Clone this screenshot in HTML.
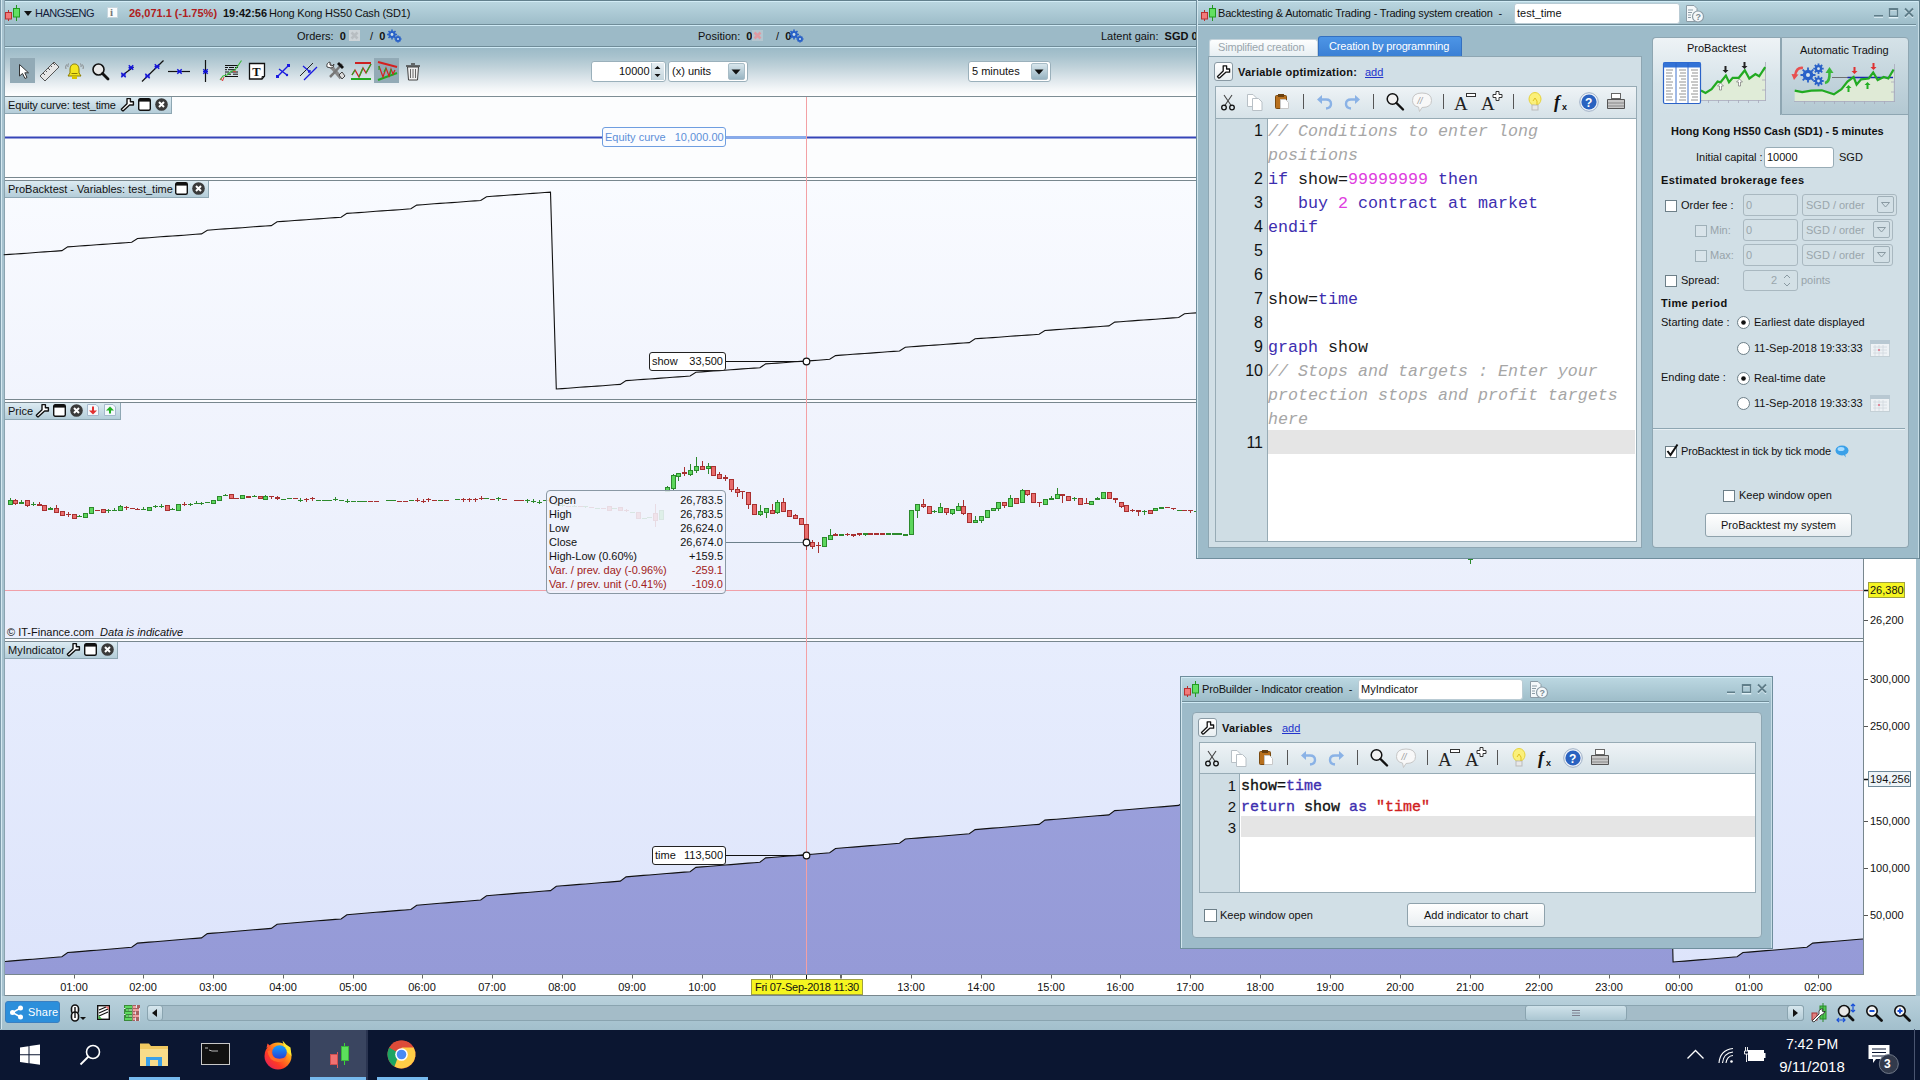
<!DOCTYPE html>
<html><head><meta charset="utf-8">
<style>
*{box-sizing:border-box}
html,body{margin:0;padding:0}
body{width:1920px;height:1080px;overflow:hidden;position:relative;background:#a3bfcc;font-family:"Liberation Sans",sans-serif;font-size:11px;color:#111}
.a{position:absolute}
.t{position:absolute;white-space:nowrap;line-height:1}
svg{position:absolute;overflow:visible}
</style></head><body>
<!-- top title bar -->
<div class="a" style="left:0;top:0;width:1920px;height:24px;background:linear-gradient(#bcd8e2,#9ebdc9)"></div>
<div class="a" style="left:0;top:0;width:1920px;height:1px;background:#62808d"></div>
<div class="a" style="left:0;top:1px;width:1920px;height:1px;background:#d2ecf6"></div>
<div class="a" style="left:0;top:24px;width:1920px;height:1px;background:#6f8c98"></div>
<div class="a" style="left:0;top:25px;width:1920px;height:1px;background:#cfeaf5"></div>
<svg style="left:4px;top:4px;z-index:2" width="17" height="18" viewBox="0 0 17 18"><line x1="4.5" y1="6" x2="4.5" y2="17" stroke="#b83030"/><rect x="1.5" y="8.5" width="6" height="6.5" fill="#f27a7a" stroke="#b83030"/><line x1="12.5" y1="1" x2="12.5" y2="17" stroke="#229922"/><rect x="9.5" y="4.5" width="6" height="8.5" fill="#62e062" stroke="#229922"/></svg>
<svg style="left:24px;top:11px" width="8" height="5"><path d="M0 0H8L4 5Z" fill="#111"/></svg>
<div class="t" style="left:35px;top:8px;font-size:11px;letter-spacing:-0.5px;color:#15203a">HANGSENG</div>
<div class="a" style="left:107px;top:7px;width:11px;height:11px;background:#fafcfd;border:1px solid #c6d6de"></div>
<div class="t" style="left:110px;top:7px;font-family:'Liberation Serif';font-weight:bold;font-size:11px;color:#777">i</div>
<div class="t" style="left:129px;top:8px;font-weight:bold;color:#b02020">26,071.1 (-1.75%)</div>
<div class="t" style="left:223px;top:8px;font-weight:bold;color:#111">19:42:56</div>
<div class="t" style="left:269px;top:8px;color:#111;letter-spacing:-0.2px">Hong Kong HS50 Cash (SD1)</div>

<!-- orders bar -->
<div class="a" style="left:0;top:26px;width:1920px;height:20px;background:#9cbac7"></div>
<div class="a" style="left:0;top:46px;width:1920px;height:1px;background:#6f8c98"></div>
<div class="a" style="left:0;top:47px;width:1920px;height:1px;background:#cfeaf5"></div>
<div class="t" style="left:297px;top:31px;color:#111">Orders:&nbsp; <b>0</b></div>
<div class="a" style="left:349px;top:30px;width:11px;height:11px;background:#cdd4d8"></div><svg style="left:349px;top:30px" width="11" height="11"><path d="M2.5 2.5L8.5 8.5M8.5 2.5L2.5 8.5" stroke="#b8bec2" stroke-width="2.6"/></svg>
<div class="t" style="left:370px;top:31px;color:#111">/&nbsp; <b>0</b></div>
<div class="t" style="left:698px;top:31px;color:#111">Position:&nbsp; <b>0</b></div>
<div class="a" style="left:752px;top:30px;width:11px;height:11px;background:#b4c6cf"></div><svg style="left:752px;top:30px" width="11" height="11"><path d="M2.5 2.5L8.5 8.5M8.5 2.5L2.5 8.5" stroke="#e09aa2" stroke-width="2.6"/></svg>
<div class="t" style="left:776px;top:31px;color:#111">/&nbsp; <b>0</b></div>
<div class="t" style="left:1101px;top:31px;color:#111">Latent gain:&nbsp; <b>SGD 0.</b></div>
<!-- toolbar -->
<div class="a" style="left:0;top:48px;width:1920px;height:48px;background:linear-gradient(#9cbac7 0%,#a9c3ce 18%,#c0d2da 40%,#dde6eb 65%,#f3f6f8 85%,#ffffff 100%)"></div>
<div class="a" style="left:0;top:96px;width:1920px;height:1px;background:#7d8d94"></div>
<!-- gears in orders bar -->
<svg style="left:386px;top:29px" width="16" height="14" viewBox="0 0 16 14"><g fill="#2a62c8"><circle cx="6" cy="5.5" r="3.6"/><circle cx="12" cy="10" r="2.6"/></g><g stroke="#2a62c8" stroke-width="1.6"><path d="M6 0.5V10.5M1 5.5H11M2.5 2L9.5 9M9.5 2L2.5 9"/><path d="M12 6.5V13.5M8.5 10H15.5M9.6 7.6L14.4 12.4M14.4 7.6L9.6 12.4"/></g><circle cx="6" cy="5.5" r="1.4" fill="#cfe0ea"/><circle cx="12" cy="10" r="1" fill="#cfe0ea"/></svg>
<svg style="left:788px;top:29px" width="16" height="14" viewBox="0 0 16 14"><g fill="#2a62c8"><circle cx="6" cy="5.5" r="3.6"/><circle cx="12" cy="10" r="2.6"/></g><g stroke="#2a62c8" stroke-width="1.6"><path d="M6 0.5V10.5M1 5.5H11M2.5 2L9.5 9M9.5 2L2.5 9"/><path d="M12 6.5V13.5M8.5 10H15.5M9.6 7.6L14.4 12.4M14.4 7.6L9.6 12.4"/></g><circle cx="6" cy="5.5" r="1.4" fill="#cfe0ea"/><circle cx="12" cy="10" r="1" fill="#cfe0ea"/></svg>
<!-- toolbar icons -->
<div class="a" style="left:10px;top:58px;width:25px;height:25px;background:#92aab6"></div>
<svg style="left:18px;top:63px" width="12" height="17" viewBox="0 0 12 17"><path d="M1.5 1.5V13L4.5 10.5L7 15.5L9 14.5L6.8 9.8H10.5Z" fill="#fff" stroke="#333" stroke-width="1"/></svg>
<svg style="left:39px;top:61px" width="21" height="21" viewBox="0 0 21 21"><path d="M1 15L15 1L20 6L6 20Z" fill="#e6e6e6" stroke="#555" stroke-width="1"/><path d="M4 12L6 14M6.5 9.5L8 11M9 7L11 9M11.5 4.5L13 6M14 2L16 4" stroke="#555" stroke-width="1"/></svg>
<svg style="left:64px;top:62px" width="21" height="18" viewBox="0 0 21 18"><path d="M10.5 2C7 2 6 5 6 8V11L4 14H17L15 11V8C15 5 14 2 10.5 2Z" fill="#f4e620" stroke="#8a7a00" stroke-width="1"/><rect x="8" y="14" width="5" height="3" fill="#d9c400"/><path d="M7.5 11.5H13.5" stroke="#8a7a00"/><path d="M2.5 2.5Q1 5 2 7M4.5 1.5Q3.5 3 4 5M18.5 2.5Q20 5 19 7M16.5 1.5Q17.5 3 17 5" stroke="#777" fill="none" stroke-width="0.8"/></svg>
<svg style="left:91px;top:62px" width="19" height="19" viewBox="0 0 19 19"><circle cx="7.5" cy="7.5" r="5.5" fill="#e8e8e8" stroke="#111" stroke-width="1.6"/><path d="M11.5 11.5L17 17" stroke="#111" stroke-width="2.8" stroke-linecap="round"/></svg>
<svg style="left:0;top:0" width="420" height="100" viewBox="0 0 420 100">
<defs><g id="mk"><path d="M-2.2 -2.2L2.2 2.2M2.2 -2.2L-2.2 2.2" stroke="#1414d8" stroke-width="1.5"/><path d="M-2.5 0H2.5" stroke="#1414d8" stroke-width="1"/></g></defs>
<path d="M122 75.5L133.5 67" stroke="#111" stroke-width="1.2"/><use href="#mk" x="123.5" y="75"/><use href="#mk" x="131" y="67.5"/>
<path d="M142 81.5L163.5 60.5" stroke="#111" stroke-width="1.2"/><use href="#mk" x="147.5" y="76"/><use href="#mk" x="157" y="66.5"/>
<path d="M168 71.5H190" stroke="#111" stroke-width="1.2"/><use href="#mk" x="179.5" y="71.5"/>
<path d="M205.5 60V82" stroke="#111" stroke-width="1.2"/><use href="#mk" x="205.5" y="71.5"/>
<path d="M225 65.5H238M225 76.5H238" stroke="#111" stroke-width="1.1"/><path d="M225 67.5H228M229 67.5H234M235 67.5H238M225 69.7H227M228 69.7H236M225 72H229M231 72H238M225 74.2H226M227 74.2H231M233 74.2H238" stroke="#111" stroke-width="1"/>
<path d="M220 80L223 76L227 75L231 71.5L235 70L241.5 60.5" stroke="#3ab83a" stroke-width="1.1" fill="none"/><path d="M221 78L222.5 81L224 77M233 71L236 72" stroke="#e04040" stroke-width="1" fill="none"/>
<path d="M249.5 63.5H264.5V76L262 79H249.5Z" fill="#fff" stroke="#111" stroke-width="1.3"/><path d="M262 79V76.5H264.5" fill="none" stroke="#111" stroke-width="0.9"/>
<text x="252.3" y="75.5" font-family="Liberation Serif" font-weight="bold" font-size="12.5" fill="#111">T</text>
</svg>
<svg style="left:275px;top:63px" width="16" height="16" viewBox="0 0 16 16"><path d="M2 14L14 2M4 6L12 12" stroke="#1a1ae0" stroke-width="1.4"/><rect x="12" y="1" width="3" height="3" fill="#1a1ae0"/><rect x="1" y="12" width="3" height="3" fill="#1a1ae0"/><circle cx="12" cy="12" r="1.2" fill="#1a1ae0"/></svg>
<svg style="left:299px;top:61px" width="20" height="20" viewBox="0 0 20 20"><path d="M1 15L14 2" stroke="#222" stroke-width="1"/><path d="M5 19L18 6" stroke="#1a1ae0" stroke-width="1.2"/><path d="M4 5L11 11M9 11H11V9" stroke="#1a1ae0" stroke-width="1.3" fill="none"/></svg>
<svg style="left:325px;top:61px" width="21" height="20" viewBox="0 0 21 20"><path d="M4 3L16 17" stroke="#888" stroke-width="3.5"/><path d="M2 6Q1 2 5 1L5 4L7 5L9 3Q9 7 6 7Z" fill="#fff" stroke="#444"/><path d="M14 14L17 11L20 15L17 18Z" fill="#ddd" stroke="#444"/><path d="M17 3L8 13L5 16" stroke="#777" stroke-width="2.5"/><path d="M14 1L19 6L17 8L12 3Z" fill="#111"/></svg>
<svg style="left:350px;top:61px" width="22" height="20" viewBox="0 0 22 20"><path d="M5 2H21" stroke="#cc2020" stroke-width="2"/><path d="M1 18H21" stroke="#22aa22" stroke-width="2"/><path d="M2 14L5 9L9 16L13 7L16 12L21 3" stroke="#cc2020" stroke-width="1.3" fill="none"/><path d="M2 14L5 9M9 16L13 7M16 12L21 3" stroke="#22aa22" stroke-width="1.2" fill="none"/></svg>
<div class="a" style="left:374px;top:58px;width:25px;height:25px;background:#92aab6"></div>
<svg style="left:376px;top:60px" width="22" height="21" viewBox="0 0 22 21"><path d="M2 2L21 7" stroke="#d42020" stroke-width="2"/><path d="M2 20L21 13" stroke="#22aa22" stroke-width="2"/><path d="M3 6L7 17L10 8L13 16L15 9L17 14L19 10" stroke="#d42020" stroke-width="1.2" fill="none"/><path d="M3 6L3 10M10 8L8 12M15 9L14 14" stroke="#22aa22" stroke-width="1.2"/></svg>
<svg style="left:405px;top:62px" width="16" height="19" viewBox="0 0 16 19"><path d="M1 4H15" stroke="#444" stroke-width="1.5"/><path d="M6 2H10" stroke="#444" stroke-width="1.5"/><path d="M2.5 5L3.5 18H12.5L13.5 5Z" fill="#f0f0f0" stroke="#444"/><path d="M5.5 7V16M8 7V16M10.5 7V16" stroke="#666"/></svg>
<!-- inputs -->
<div class="a" style="left:591px;top:61px;width:75px;height:21px;background:#fff;border:1px solid #9ab0bb;border-radius:3px"></div>
<div class="t" style="left:619px;top:66px;font-size:11px">10000</div>
<div class="a" style="left:651px;top:63px;width:13px;height:17px;background:linear-gradient(#e6eef2,#c4d5dd);border-left:1px solid #b4c6cf"></div>
<svg style="left:653px;top:64px" width="9" height="15"><path d="M1.5 5L4.5 2L7.5 5Z M1.5 10L4.5 13L7.5 10Z" fill="#111"/></svg>
<div class="a" style="left:668px;top:61px;width:80px;height:21px;background:#fff;border:1px solid #9ab0bb;border-radius:3px"></div>
<div class="t" style="left:672px;top:66px;font-size:11px">(x) units</div>
<div class="a" style="left:728px;top:63px;width:17px;height:17px;background:linear-gradient(#d8e6ec,#98b4c2);border:1px solid #a8bcc6;border-radius:2px"></div>
<svg style="left:731px;top:69px" width="10" height="6"><path d="M0.5 0.5H9.5L5 5.5Z" fill="#111"/></svg>
<div class="a" style="left:968px;top:61px;width:83px;height:21px;background:#fff;border:1px solid #9ab0bb;border-radius:3px"></div>
<div class="t" style="left:972px;top:66px;font-size:11px">5 minutes</div>
<div class="a" style="left:1031px;top:63px;width:17px;height:17px;background:linear-gradient(#d8e6ec,#98b4c2);border:1px solid #a8bcc6;border-radius:2px"></div>
<svg style="left:1034px;top:69px" width="10" height="6"><path d="M0.5 0.5H9.5L5 5.5Z" fill="#111"/></svg>
<div class="a" style="left:0;top:0;width:1px;height:1029px;background:#7d9bab"></div>
<div class="a" style="left:1px;top:0;width:1px;height:1029px;background:#d4e8f0"></div>
<div class="a" style="left:2px;top:0;width:2px;height:1029px;background:#a6c2cf"></div>
<div class="a" style="left:4px;top:0;width:1px;height:996px;background:#8aa3af"></div>
<div class="a" style="left:1915px;top:96px;width:1px;height:900px;background:#8aa3af"></div>
<div class="a" style="left:5px;top:97px;width:1910px;height:898px;background:#fcfdff"></div>
<div class="a" style="left:5px;top:97px;width:1858px;height:80px;background:#fcfdfe"></div>
<div class="a" style="left:5px;top:177px;width:1859px;height:1px;background:#78878e"></div>
<div class="a" style="left:1863px;top:96px;width:1px;height:82px;background:#78878e"></div>
<div class="a" style="left:5px;top:181px;width:1858px;height:218px;background:linear-gradient(#f9fbff,#f1f4fd)"></div>
<div class="a" style="left:5px;top:399px;width:1859px;height:1px;background:#78878e"></div>
<div class="a" style="left:5px;top:180px;width:1859px;height:1px;background:#78878e"></div>
<div class="a" style="left:1863px;top:180px;width:1px;height:220px;background:#78878e"></div>
<div class="a" style="left:5px;top:403px;width:1858px;height:235px;background:linear-gradient(#f1f4fd,#e9eefc)"></div>
<div class="a" style="left:5px;top:638px;width:1859px;height:1px;background:#78878e"></div>
<div class="a" style="left:5px;top:402px;width:1859px;height:1px;background:#78878e"></div>
<div class="a" style="left:1863px;top:402px;width:1px;height:237px;background:#78878e"></div>
<div class="a" style="left:5px;top:642px;width:1858px;height:332px;background:linear-gradient(#e7edfd,#dde4fb)"></div>
<div class="a" style="left:5px;top:974px;width:1859px;height:1px;background:#78878e"></div>
<div class="a" style="left:5px;top:641px;width:1859px;height:1px;background:#78878e"></div>
<div class="a" style="left:1863px;top:641px;width:1px;height:334px;background:#78878e"></div>
<div class="a" style="left:5px;top:995px;width:1910px;height:1px;background:#78878e"></div>
<svg style="left:0;top:0" width="1920" height="1080" viewBox="0 0 1920 1080">
<path d="M5 137.5H1863" stroke="#3646b8" stroke-width="2"/>
<path d="M3.7 254.8 L9.5 254.4 L15.3 254.0 L21.1 253.6 L27.0 253.2 L32.8 252.7 L38.6 252.3 L44.4 251.9 L50.2 251.5 L56.0 251.1 L61.9 250.6 L67.7 246.9 L73.5 246.5 L79.3 246.0 L85.1 245.6 L90.9 245.2 L96.8 244.8 L102.6 244.4 L108.4 244.0 L114.2 243.5 L120.0 243.1 L125.8 242.7 L131.7 242.3 L137.5 238.5 L143.3 238.1 L149.1 237.7 L154.9 237.3 L160.7 236.8 L166.6 236.4 L172.4 236.0 L178.2 235.6 L184.0 235.2 L189.8 234.8 L195.7 234.3 L201.5 233.9 L207.3 230.2 L213.1 229.7 L218.9 229.3 L224.7 228.9 L230.6 228.5 L236.4 228.1 L242.2 227.7 L248.0 227.2 L253.8 226.8 L259.6 226.4 L265.5 226.0 L271.3 225.6 L277.1 221.8 L282.9 221.4 L288.7 221.0 L294.5 220.5 L300.4 220.1 L306.2 219.7 L312.0 219.3 L317.8 218.9 L323.6 218.5 L329.4 218.0 L335.2 217.6 L341.1 217.2 L346.9 213.4 L352.7 213.0 L358.5 212.6 L364.3 212.2 L370.1 211.8 L376.0 211.3 L381.8 210.9 L387.6 210.5 L393.4 210.1 L399.2 209.7 L405.0 209.3 L410.9 208.8 L416.7 205.1 L422.5 204.7 L428.3 204.2 L434.1 203.8 L439.9 203.4 L445.8 203.0 L451.6 202.6 L457.4 202.2 L463.2 201.7 L469.0 201.3 L474.8 200.9 L480.7 200.5 L486.5 196.7 L492.3 196.3 L498.1 195.9 L503.9 195.5 L509.7 195.0 L515.6 194.6 L521.4 194.2 L527.2 193.8 L533.0 193.4 L538.8 193.0 L544.6 192.5 L550.5 192.1 L556.3 389.0 L562.1 388.6 L567.9 388.2 L573.7 387.7 L579.5 387.3 L585.4 386.9 L591.2 386.5 L597.0 386.1 L602.8 385.7 L608.6 385.2 L614.4 384.8 L620.3 384.4 L626.1 380.6 L631.9 380.2 L637.7 379.8 L643.5 379.4 L649.3 379.0 L655.2 378.6 L661.0 378.1 L666.8 377.7 L672.6 377.3 L678.4 376.9 L684.2 376.5 L690.1 376.0 L695.9 372.3 L701.7 371.9 L707.5 371.4 L713.3 371.0 L719.2 370.6 L725.0 370.2 L730.8 369.8 L736.6 369.4 L742.4 368.9 L748.2 368.5 L754.1 368.1 L759.9 367.7 L765.7 363.9 L771.5 363.5 L777.3 363.1 L783.1 362.7 L789.0 362.2 L794.8 361.8 L800.6 361.4 L806.4 361.0 L812.2 360.6 L818.0 360.2 L823.9 359.7 L829.7 359.3 L835.5 355.6 L841.3 355.1 L847.1 354.7 L852.9 354.3 L858.8 353.9 L864.6 353.5 L870.4 353.1 L876.2 352.6 L882.0 352.2 L887.8 351.8 L893.7 351.4 L899.5 351.0 L905.3 347.2 L911.1 346.8 L916.9 346.4 L922.7 345.9 L928.6 345.5 L934.4 345.1 L940.2 344.7 L946.0 344.3 L951.8 343.9 L957.6 343.4 L963.5 343.0 L969.3 342.6 L975.1 338.8 L980.9 338.4 L986.7 338.0 L992.5 337.6 L998.4 337.2 L1004.2 336.8 L1010.0 336.3 L1015.8 335.9 L1021.6 335.5 L1027.4 335.1 L1033.3 334.7 L1039.1 334.2 L1044.9 330.5 L1050.7 330.1 L1056.5 329.6 L1062.3 329.2 L1068.2 328.8 L1074.0 328.4 L1079.8 328.0 L1085.6 327.6 L1091.4 327.1 L1097.2 326.7 L1103.1 326.3 L1108.9 325.9 L1114.7 322.1 L1120.5 321.7 L1126.3 321.3 L1132.1 320.9 L1138.0 320.4 L1143.8 320.0 L1149.6 319.6 L1155.4 319.2 L1161.2 318.8 L1167.0 318.4 L1172.9 317.9 L1178.7 317.5 L1184.5 313.8 L1190.3 313.3 L1196.1 312.9" stroke="#111" stroke-width="1.1" fill="none"/>
<clipPath id="cp1"><rect x="5" y="642" width="1858" height="332"/></clipPath>
<path clip-path="url(#cp1)" d="M5 974 L5.0 961.5 L9.5 961.1 L15.3 960.6 L21.1 960.1 L27.0 959.6 L32.8 959.2 L38.6 958.7 L44.4 958.2 L50.2 957.7 L56.0 957.3 L61.9 956.8 L67.7 952.5 L73.5 952.1 L79.3 951.6 L85.1 951.1 L90.9 950.6 L96.8 950.2 L102.6 949.7 L108.4 949.2 L114.2 948.8 L120.0 948.3 L125.8 947.8 L131.7 947.3 L137.5 943.1 L143.3 942.6 L149.1 942.1 L154.9 941.7 L160.7 941.2 L166.6 940.7 L172.4 940.2 L178.2 939.8 L184.0 939.3 L189.8 938.8 L195.7 938.4 L201.5 937.9 L207.3 933.6 L213.1 933.1 L218.9 932.7 L224.7 932.2 L230.6 931.7 L236.4 931.3 L242.2 930.8 L248.0 930.3 L253.8 929.8 L259.6 929.4 L265.5 928.9 L271.3 928.4 L277.1 924.2 L282.9 923.7 L288.7 923.2 L294.5 922.7 L300.4 922.3 L306.2 921.8 L312.0 921.3 L317.8 920.8 L323.6 920.4 L329.4 919.9 L335.2 919.4 L341.1 919.0 L346.9 914.7 L352.7 914.2 L358.5 913.8 L364.3 913.3 L370.1 912.8 L376.0 912.3 L381.8 911.9 L387.6 911.4 L393.4 910.9 L399.2 910.4 L405.0 910.0 L410.9 909.5 L416.7 905.2 L422.5 904.8 L428.3 904.3 L434.1 903.8 L439.9 903.3 L445.8 902.9 L451.6 902.4 L457.4 901.9 L463.2 901.5 L469.0 901.0 L474.8 900.5 L480.7 900.0 L486.5 895.8 L492.3 895.3 L498.1 894.8 L503.9 894.4 L509.7 893.9 L515.6 893.4 L521.4 892.9 L527.2 892.5 L533.0 892.0 L538.8 891.5 L544.6 891.0 L550.5 890.6 L556.3 886.3 L562.1 885.8 L567.9 885.4 L573.7 884.9 L579.5 884.4 L585.4 884.0 L591.2 883.5 L597.0 883.0 L602.8 882.5 L608.6 882.1 L614.4 881.6 L620.3 881.1 L626.1 876.9 L631.9 876.4 L637.7 875.9 L643.5 875.4 L649.3 875.0 L655.2 874.5 L661.0 874.0 L666.8 873.5 L672.6 873.1 L678.4 872.6 L684.2 872.1 L690.1 871.7 L695.9 867.4 L701.7 866.9 L707.5 866.5 L713.3 866.0 L719.2 865.5 L725.0 865.0 L730.8 864.6 L736.6 864.1 L742.4 863.6 L748.2 863.1 L754.1 862.7 L759.9 862.2 L765.7 857.9 L771.5 857.5 L777.3 857.0 L783.1 856.5 L789.0 856.0 L794.8 855.6 L800.6 855.1 L806.4 854.6 L812.2 854.2 L818.0 853.7 L823.9 853.2 L829.7 852.7 L835.5 848.5 L841.3 848.0 L847.1 847.5 L852.9 847.1 L858.8 846.6 L864.6 846.1 L870.4 845.6 L876.2 845.2 L882.0 844.7 L887.8 844.2 L893.7 843.8 L899.5 843.3 L905.3 839.0 L911.1 838.5 L916.9 838.1 L922.7 837.6 L928.6 837.1 L934.4 836.7 L940.2 836.2 L946.0 835.7 L951.8 835.2 L957.6 834.8 L963.5 834.3 L969.3 833.8 L975.1 829.6 L980.9 829.1 L986.7 828.6 L992.5 828.1 L998.4 827.7 L1004.2 827.2 L1010.0 826.7 L1015.8 826.2 L1021.6 825.8 L1027.4 825.3 L1033.3 824.8 L1039.1 824.4 L1044.9 820.1 L1050.7 819.6 L1056.5 819.2 L1062.3 818.7 L1068.2 818.2 L1074.0 817.7 L1079.8 817.3 L1085.6 816.8 L1091.4 816.3 L1097.2 815.8 L1103.1 815.4 L1108.9 814.9 L1114.7 810.6 L1120.5 810.2 L1126.3 809.7 L1132.1 809.2 L1138.0 808.7 L1143.8 808.3 L1149.6 807.8 L1155.4 807.3 L1161.2 806.9 L1167.0 806.4 L1172.9 805.9 L1178.7 805.4 L1184.5 801.2 L1190.3 800.7 L1196.1 800.2 L1201.9 799.8 L1207.8 799.3 L1213.6 798.8 L1219.4 798.3 L1225.2 797.9 L1231.0 797.4 L1236.8 796.9 L1242.7 796.5 L1248.5 796.0 L1254.3 791.7 L1260.1 791.2 L1265.9 790.8 L1271.7 790.3 L1277.6 789.8 L1283.4 789.4 L1289.2 788.9 L1295.0 788.4 L1300.8 787.9 L1306.6 787.5 L1312.5 787.0 L1318.3 786.5 L1324.1 782.3 L1329.9 781.8 L1335.7 781.3 L1341.5 780.8 L1347.3 780.4 L1353.2 779.9 L1359.0 779.4 L1364.8 778.9 L1370.6 778.5 L1376.4 778.0 L1382.2 777.5 L1388.1 777.1 L1393.9 772.8 L1399.7 772.3 L1405.5 771.9 L1411.3 771.4 L1417.1 770.9 L1423.0 770.4 L1428.8 770.0 L1434.6 769.5 L1440.4 769.0 L1446.2 768.5 L1452.0 768.1 L1457.9 767.6 L1463.7 763.3 L1469.5 762.9 L1475.3 762.4 L1481.1 761.9 L1486.9 761.4 L1492.8 761.0 L1498.6 760.5 L1504.4 760.0 L1510.2 759.6 L1516.0 759.1 L1521.8 758.6 L1527.7 758.1 L1533.5 753.9 L1539.3 753.4 L1545.1 752.9 L1550.9 752.5 L1556.7 752.0 L1562.6 751.5 L1568.4 751.0 L1574.2 750.6 L1580.0 750.1 L1585.8 749.6 L1591.6 749.1 L1597.5 748.7 L1603.3 744.4 L1609.1 743.9 L1614.9 743.5 L1620.7 743.0 L1626.5 742.5 L1632.4 742.1 L1638.2 741.6 L1644.0 741.1 L1649.8 740.6 L1655.6 740.2 L1661.4 739.7 L1667.3 739.2 L1673.1 962.0 L1678.9 961.5 L1684.7 961.1 L1690.5 960.6 L1696.3 960.1 L1702.2 959.6 L1708.0 959.2 L1713.8 958.7 L1719.6 958.2 L1725.4 957.7 L1731.2 957.3 L1737.1 956.8 L1742.9 952.5 L1748.7 952.1 L1754.5 951.6 L1760.3 951.1 L1766.1 950.6 L1772.0 950.2 L1777.8 949.7 L1783.6 949.2 L1789.4 948.8 L1795.2 948.3 L1801.0 947.8 L1806.9 947.3 L1812.7 943.1 L1818.5 942.6 L1824.3 942.1 L1830.1 941.7 L1835.9 941.2 L1841.8 940.7 L1847.6 940.2 L1853.4 939.8 L1859.2 939.3 L1865.0 938.8 L1863 974Z" fill="url(#ga)"/>
<defs><linearGradient id="ga" x1="0" y1="0" x2="0" y2="1"><stop offset="0" stop-color="#9ba1dc"/><stop offset="1" stop-color="#959ad7"/></linearGradient></defs>
<path clip-path="url(#cp1)" d="M5.0 961.5 L9.5 961.1 L15.3 960.6 L21.1 960.1 L27.0 959.6 L32.8 959.2 L38.6 958.7 L44.4 958.2 L50.2 957.7 L56.0 957.3 L61.9 956.8 L67.7 952.5 L73.5 952.1 L79.3 951.6 L85.1 951.1 L90.9 950.6 L96.8 950.2 L102.6 949.7 L108.4 949.2 L114.2 948.8 L120.0 948.3 L125.8 947.8 L131.7 947.3 L137.5 943.1 L143.3 942.6 L149.1 942.1 L154.9 941.7 L160.7 941.2 L166.6 940.7 L172.4 940.2 L178.2 939.8 L184.0 939.3 L189.8 938.8 L195.7 938.4 L201.5 937.9 L207.3 933.6 L213.1 933.1 L218.9 932.7 L224.7 932.2 L230.6 931.7 L236.4 931.3 L242.2 930.8 L248.0 930.3 L253.8 929.8 L259.6 929.4 L265.5 928.9 L271.3 928.4 L277.1 924.2 L282.9 923.7 L288.7 923.2 L294.5 922.7 L300.4 922.3 L306.2 921.8 L312.0 921.3 L317.8 920.8 L323.6 920.4 L329.4 919.9 L335.2 919.4 L341.1 919.0 L346.9 914.7 L352.7 914.2 L358.5 913.8 L364.3 913.3 L370.1 912.8 L376.0 912.3 L381.8 911.9 L387.6 911.4 L393.4 910.9 L399.2 910.4 L405.0 910.0 L410.9 909.5 L416.7 905.2 L422.5 904.8 L428.3 904.3 L434.1 903.8 L439.9 903.3 L445.8 902.9 L451.6 902.4 L457.4 901.9 L463.2 901.5 L469.0 901.0 L474.8 900.5 L480.7 900.0 L486.5 895.8 L492.3 895.3 L498.1 894.8 L503.9 894.4 L509.7 893.9 L515.6 893.4 L521.4 892.9 L527.2 892.5 L533.0 892.0 L538.8 891.5 L544.6 891.0 L550.5 890.6 L556.3 886.3 L562.1 885.8 L567.9 885.4 L573.7 884.9 L579.5 884.4 L585.4 884.0 L591.2 883.5 L597.0 883.0 L602.8 882.5 L608.6 882.1 L614.4 881.6 L620.3 881.1 L626.1 876.9 L631.9 876.4 L637.7 875.9 L643.5 875.4 L649.3 875.0 L655.2 874.5 L661.0 874.0 L666.8 873.5 L672.6 873.1 L678.4 872.6 L684.2 872.1 L690.1 871.7 L695.9 867.4 L701.7 866.9 L707.5 866.5 L713.3 866.0 L719.2 865.5 L725.0 865.0 L730.8 864.6 L736.6 864.1 L742.4 863.6 L748.2 863.1 L754.1 862.7 L759.9 862.2 L765.7 857.9 L771.5 857.5 L777.3 857.0 L783.1 856.5 L789.0 856.0 L794.8 855.6 L800.6 855.1 L806.4 854.6 L812.2 854.2 L818.0 853.7 L823.9 853.2 L829.7 852.7 L835.5 848.5 L841.3 848.0 L847.1 847.5 L852.9 847.1 L858.8 846.6 L864.6 846.1 L870.4 845.6 L876.2 845.2 L882.0 844.7 L887.8 844.2 L893.7 843.8 L899.5 843.3 L905.3 839.0 L911.1 838.5 L916.9 838.1 L922.7 837.6 L928.6 837.1 L934.4 836.7 L940.2 836.2 L946.0 835.7 L951.8 835.2 L957.6 834.8 L963.5 834.3 L969.3 833.8 L975.1 829.6 L980.9 829.1 L986.7 828.6 L992.5 828.1 L998.4 827.7 L1004.2 827.2 L1010.0 826.7 L1015.8 826.2 L1021.6 825.8 L1027.4 825.3 L1033.3 824.8 L1039.1 824.4 L1044.9 820.1 L1050.7 819.6 L1056.5 819.2 L1062.3 818.7 L1068.2 818.2 L1074.0 817.7 L1079.8 817.3 L1085.6 816.8 L1091.4 816.3 L1097.2 815.8 L1103.1 815.4 L1108.9 814.9 L1114.7 810.6 L1120.5 810.2 L1126.3 809.7 L1132.1 809.2 L1138.0 808.7 L1143.8 808.3 L1149.6 807.8 L1155.4 807.3 L1161.2 806.9 L1167.0 806.4 L1172.9 805.9 L1178.7 805.4 L1184.5 801.2 L1190.3 800.7 L1196.1 800.2 L1201.9 799.8 L1207.8 799.3 L1213.6 798.8 L1219.4 798.3 L1225.2 797.9 L1231.0 797.4 L1236.8 796.9 L1242.7 796.5 L1248.5 796.0 L1254.3 791.7 L1260.1 791.2 L1265.9 790.8 L1271.7 790.3 L1277.6 789.8 L1283.4 789.4 L1289.2 788.9 L1295.0 788.4 L1300.8 787.9 L1306.6 787.5 L1312.5 787.0 L1318.3 786.5 L1324.1 782.3 L1329.9 781.8 L1335.7 781.3 L1341.5 780.8 L1347.3 780.4 L1353.2 779.9 L1359.0 779.4 L1364.8 778.9 L1370.6 778.5 L1376.4 778.0 L1382.2 777.5 L1388.1 777.1 L1393.9 772.8 L1399.7 772.3 L1405.5 771.9 L1411.3 771.4 L1417.1 770.9 L1423.0 770.4 L1428.8 770.0 L1434.6 769.5 L1440.4 769.0 L1446.2 768.5 L1452.0 768.1 L1457.9 767.6 L1463.7 763.3 L1469.5 762.9 L1475.3 762.4 L1481.1 761.9 L1486.9 761.4 L1492.8 761.0 L1498.6 760.5 L1504.4 760.0 L1510.2 759.6 L1516.0 759.1 L1521.8 758.6 L1527.7 758.1 L1533.5 753.9 L1539.3 753.4 L1545.1 752.9 L1550.9 752.5 L1556.7 752.0 L1562.6 751.5 L1568.4 751.0 L1574.2 750.6 L1580.0 750.1 L1585.8 749.6 L1591.6 749.1 L1597.5 748.7 L1603.3 744.4 L1609.1 743.9 L1614.9 743.5 L1620.7 743.0 L1626.5 742.5 L1632.4 742.1 L1638.2 741.6 L1644.0 741.1 L1649.8 740.6 L1655.6 740.2 L1661.4 739.7 L1667.3 739.2 L1673.1 962.0 L1678.9 961.5 L1684.7 961.1 L1690.5 960.6 L1696.3 960.1 L1702.2 959.6 L1708.0 959.2 L1713.8 958.7 L1719.6 958.2 L1725.4 957.7 L1731.2 957.3 L1737.1 956.8 L1742.9 952.5 L1748.7 952.1 L1754.5 951.6 L1760.3 951.1 L1766.1 950.6 L1772.0 950.2 L1777.8 949.7 L1783.6 949.2 L1789.4 948.8 L1795.2 948.3 L1801.0 947.8 L1806.9 947.3 L1812.7 943.1 L1818.5 942.6 L1824.3 942.1 L1830.1 941.7 L1835.9 941.2 L1841.8 940.7 L1847.6 940.2 L1853.4 939.8 L1859.2 939.3 L1865.0 938.8" stroke="#111" stroke-width="1.1" fill="none"/>
<path d="M806.5 97V978" stroke="#f3a0a4" stroke-width="1"/>
<path d="M5 590.5H1864" stroke="#f0a0a8" stroke-width="1"/>
</svg><svg style="left:0;top:0" width="1920" height="1080" viewBox="0 0 1920 1080"><clipPath id="cp2"><rect x="5" y="403" width="1858" height="235"/></clipPath><g clip-path="url(#cp2)" shape-rendering="crispEdges"><path d="M10.5 498.0V504.5" stroke="#2c8a2c"/><rect x="8.5" y="500.5" width="4" height="4" fill="#5cd65c" stroke="#2c8a2c"/><path d="M15.5 499.0V505.0" stroke="#a83030"/><rect x="13.5" y="500.5" width="4" height="3" fill="#e86c6c" stroke="#a83030"/><path d="M21.5 500.0V504.0" stroke="#2c8a2c"/><rect x="19" y="502" width="5" height="2" fill="#2c8a2c"/><path d="M27.5 500.5V507.0" stroke="#a83030"/><rect x="25.5" y="500.5" width="4" height="5" fill="#e86c6c" stroke="#a83030"/><path d="M33.5 502.0V506.0" stroke="#2c8a2c"/><rect x="31" y="504" width="5" height="1" fill="#2c8a2c"/><path d="M39.5 502.0V505.5" stroke="#a83030"/><rect x="37" y="504" width="5" height="2" fill="#a83030"/><path d="M44.5 505.0V510.0" stroke="#a83030"/><rect x="42.5" y="505.5" width="4" height="5" fill="#e86c6c" stroke="#a83030"/><path d="M50.5 507.0V509.5" stroke="#2c8a2c"/><rect x="48" y="508" width="5" height="2" fill="#2c8a2c"/><path d="M56.5 505.0V513.0" stroke="#a83030"/><rect x="54.5" y="508.5" width="4" height="4" fill="#e86c6c" stroke="#a83030"/><rect x="60.5" y="511.5" width="4" height="4" fill="#e86c6c" stroke="#a83030"/><path d="M68.5 512.0V517.0" stroke="#a83030"/><rect x="66" y="514" width="5" height="1" fill="#a83030"/><rect x="72.5" y="514.5" width="4" height="4" fill="#e86c6c" stroke="#a83030"/><path d="M79.5 515.0V517.0" stroke="#2c8a2c"/><rect x="77" y="516" width="5" height="1" fill="#2c8a2c"/><rect x="83.5" y="513.5" width="4" height="4" fill="#5cd65c" stroke="#2c8a2c"/><rect x="89.5" y="507.5" width="4" height="6" fill="#5cd65c" stroke="#2c8a2c"/><rect x="95" y="510" width="5" height="1" fill="#a83030"/><path d="M103.5 509.0V513.0" stroke="#a83030"/><rect x="101.5" y="509.5" width="4" height="3" fill="#e86c6c" stroke="#a83030"/><path d="M108.5 509.0V513.0" stroke="#2c8a2c"/><rect x="106" y="510" width="5" height="1" fill="#2c8a2c"/><path d="M114.5 508.0V510.5" stroke="#2c8a2c"/><rect x="112" y="510" width="5" height="1" fill="#2c8a2c"/><path d="M120.5 505.0V509.5" stroke="#2c8a2c"/><rect x="118.5" y="506.5" width="4" height="4" fill="#5cd65c" stroke="#2c8a2c"/><path d="M126.5 506.0V510.0" stroke="#a83030"/><rect x="124" y="507" width="5" height="1" fill="#a83030"/><rect x="130" y="508" width="5" height="1" fill="#a83030"/><path d="M137.5 508.0V510.0" stroke="#a83030"/><rect x="135" y="509" width="5" height="1" fill="#a83030"/><path d="M143.5 507.0V510.0" stroke="#2c8a2c"/><rect x="141" y="509" width="5" height="1" fill="#2c8a2c"/><path d="M149.5 507.0V511.0" stroke="#2c8a2c"/><rect x="147.5" y="507.5" width="4" height="3" fill="#5cd65c" stroke="#2c8a2c"/><path d="M155.5 505.0V508.0" stroke="#2c8a2c"/><rect x="153" y="506" width="5" height="1" fill="#2c8a2c"/><path d="M161.5 504.0V508.0" stroke="#2c8a2c"/><rect x="159" y="506" width="5" height="1" fill="#2c8a2c"/><rect x="165.5" y="505.5" width="4" height="5" fill="#e86c6c" stroke="#a83030"/><path d="M172.5 508.0V509.8" stroke="#2c8a2c"/><rect x="170" y="509" width="5" height="1" fill="#2c8a2c"/><rect x="176.5" y="504.5" width="4" height="6" fill="#5cd65c" stroke="#2c8a2c"/><path d="M184.5 502.0V506.0" stroke="#a83030"/><rect x="182" y="504" width="5" height="1" fill="#a83030"/><path d="M190.5 503.0V506.0" stroke="#2c8a2c"/><rect x="188" y="504" width="5" height="1" fill="#2c8a2c"/><path d="M196.5 501.0V504.0" stroke="#2c8a2c"/><rect x="194" y="503" width="5" height="1" fill="#2c8a2c"/><path d="M201.5 502.0V505.0" stroke="#2c8a2c"/><rect x="199" y="503" width="5" height="1" fill="#2c8a2c"/><rect x="205" y="502" width="5" height="1" fill="#2c8a2c"/><rect x="211.5" y="500.5" width="4" height="3" fill="#5cd65c" stroke="#2c8a2c"/><rect x="217.5" y="496.5" width="4" height="4" fill="#5cd65c" stroke="#2c8a2c"/><path d="M225.5 494.0V496.0" stroke="#2c8a2c"/><rect x="223" y="495" width="5" height="1" fill="#2c8a2c"/><path d="M231.5 493.5V498.5" stroke="#a83030"/><rect x="229.5" y="494.5" width="4" height="4" fill="#e86c6c" stroke="#a83030"/><rect x="234" y="498" width="5" height="1" fill="#a83030"/><rect x="240.5" y="495.5" width="4" height="3" fill="#5cd65c" stroke="#2c8a2c"/><rect x="246" y="496" width="5" height="2" fill="#a83030"/><path d="M254.5 495.0V497.0" stroke="#2c8a2c"/><rect x="252" y="496" width="5" height="1" fill="#2c8a2c"/><rect x="258.5" y="496.5" width="4" height="2" fill="#e86c6c" stroke="#a83030"/><path d="M265.5 495.0V500.0" stroke="#2c8a2c"/><rect x="263.5" y="496.5" width="4" height="3" fill="#5cd65c" stroke="#2c8a2c"/><path d="M271.5 496.5V498.5" stroke="#a83030"/><rect x="269" y="496" width="5" height="1" fill="#a83030"/><path d="M277.5 496.0V500.0" stroke="#a83030"/><rect x="275" y="497" width="5" height="2" fill="#a83030"/><rect x="281" y="499" width="5" height="1" fill="#2c8a2c"/><rect x="287" y="498" width="5" height="1" fill="#2c8a2c"/><rect x="293" y="498" width="5" height="1" fill="#a83030"/><path d="M300.5 498.0V502.0" stroke="#2c8a2c"/><rect x="298" y="500" width="5" height="1" fill="#2c8a2c"/><path d="M306.5 497.8V501.8" stroke="#a83030"/><rect x="304" y="499" width="5" height="1" fill="#a83030"/><path d="M312.5 496.8V500.8" stroke="#a83030"/><rect x="310" y="498" width="5" height="1" fill="#a83030"/><rect x="316" y="500" width="5" height="1" fill="#2c8a2c"/><rect x="322" y="500" width="5" height="1" fill="#2c8a2c"/><rect x="327" y="500" width="5" height="1" fill="#2c8a2c"/><path d="M335.5 497.4V501.4" stroke="#2c8a2c"/><rect x="333" y="499" width="5" height="1" fill="#2c8a2c"/><rect x="339" y="500" width="5" height="1" fill="#2c8a2c"/><path d="M347.5 499.3V503.3" stroke="#2c8a2c"/><rect x="345" y="501" width="5" height="1" fill="#2c8a2c"/><rect x="351" y="501" width="5" height="1" fill="#2c8a2c"/><rect x="357" y="501" width="5" height="1" fill="#2c8a2c"/><rect x="362" y="501" width="5" height="1" fill="#2c8a2c"/><rect x="368" y="501" width="5" height="1" fill="#a83030"/><rect x="374" y="501" width="5" height="1" fill="#a83030"/><rect x="386" y="500" width="5" height="1" fill="#2c8a2c"/><rect x="391" y="500" width="5" height="1" fill="#2c8a2c"/><rect x="397" y="501" width="5" height="1" fill="#a83030"/><rect x="403" y="501" width="5" height="1" fill="#a83030"/><rect x="409" y="500" width="5" height="1" fill="#2c8a2c"/><path d="M417.5 498.4V502.4" stroke="#a83030"/><rect x="415" y="500" width="5" height="1" fill="#a83030"/><path d="M423.5 499.0V503.0" stroke="#a83030"/><rect x="421" y="501" width="5" height="1" fill="#a83030"/><path d="M428.5 497.8V501.8" stroke="#a83030"/><rect x="426" y="499" width="5" height="1" fill="#a83030"/><rect x="432" y="500" width="5" height="1" fill="#a83030"/><rect x="438" y="500" width="5" height="1" fill="#2c8a2c"/><rect x="444" y="500" width="5" height="1" fill="#a83030"/><rect x="455" y="499" width="5" height="1" fill="#2c8a2c"/><path d="M463.5 497.7V501.7" stroke="#a83030"/><rect x="461" y="499" width="5" height="1" fill="#a83030"/><path d="M469.5 497.8V501.8" stroke="#a83030"/><rect x="467" y="499" width="5" height="1" fill="#a83030"/><path d="M475.5 497.6V501.6" stroke="#a83030"/><rect x="473" y="499" width="5" height="1" fill="#a83030"/><path d="M481.5 496.3V500.3" stroke="#a83030"/><rect x="479" y="498" width="5" height="1" fill="#a83030"/><rect x="484" y="498" width="5" height="1" fill="#2c8a2c"/><rect x="490" y="499" width="5" height="1" fill="#a83030"/><path d="M498.5 496.9V500.9" stroke="#2c8a2c"/><rect x="496" y="498" width="5" height="1" fill="#2c8a2c"/><rect x="502" y="499" width="5" height="1" fill="#a83030"/><rect x="514" y="500" width="5" height="1" fill="#a83030"/><rect x="519" y="500" width="5" height="1" fill="#a83030"/><path d="M527.5 498.7V502.7" stroke="#2c8a2c"/><rect x="525" y="500" width="5" height="1" fill="#2c8a2c"/><path d="M533.5 499.2V503.2" stroke="#2c8a2c"/><rect x="531" y="501" width="5" height="1" fill="#2c8a2c"/><path d="M539.5 500.2V504.2" stroke="#2c8a2c"/><rect x="537" y="502" width="5" height="1" fill="#2c8a2c"/><rect x="543" y="500" width="5" height="1" fill="#2c8a2c"/><rect x="548" y="500" width="5" height="1" fill="#a83030"/><rect x="554" y="504" width="5" height="1" fill="#2c8a2c"/><path d="M562.5 504.0V507.0" stroke="#2c8a2c"/><rect x="560" y="505" width="5" height="1" fill="#2c8a2c"/><rect x="566" y="506" width="5" height="1" fill="#a83030"/><path d="M574.5 505.0V507.0" stroke="#2c8a2c"/><rect x="572" y="506" width="5" height="1" fill="#2c8a2c"/><rect x="578" y="506" width="5" height="1" fill="#a83030"/><path d="M585.5 506.0V508.0" stroke="#2c8a2c"/><rect x="583" y="506" width="5" height="1" fill="#2c8a2c"/><rect x="589" y="507" width="5" height="1" fill="#a83030"/><rect x="595" y="508" width="5" height="1" fill="#2c8a2c"/><rect x="601" y="508" width="5" height="1" fill="#a83030"/><rect x="607.5" y="506.5" width="4" height="4" fill="#e86c6c" stroke="#a83030"/><rect x="612" y="508" width="5" height="1" fill="#2c8a2c"/><rect x="618.5" y="507.5" width="4" height="3" fill="#e86c6c" stroke="#a83030"/><path d="M626.5 509.0V512.0" stroke="#a83030"/><rect x="624" y="510" width="5" height="1" fill="#a83030"/><rect x="630" y="512" width="5" height="1" fill="#2c8a2c"/><rect x="636.5" y="512.5" width="4" height="6" fill="#e86c6c" stroke="#a83030"/><path d="M644.5 517.5V519.0" stroke="#2c8a2c"/><rect x="642" y="518" width="5" height="1" fill="#2c8a2c"/><rect x="647" y="517" width="5" height="1" fill="#2c8a2c"/><path d="M655.5 504.0V527.0" stroke="#a83030"/><rect x="653.5" y="513.5" width="4" height="7" fill="#e86c6c" stroke="#a83030"/><rect x="659.5" y="510.5" width="4" height="9" fill="#5cd65c" stroke="#2c8a2c"/><path d="M667.5 486.0V491.0" stroke="#2c8a2c"/><rect x="665.5" y="487.5" width="4" height="4" fill="#5cd65c" stroke="#2c8a2c"/><path d="M673.5 474.0V490.0" stroke="#2c8a2c"/><rect x="671.5" y="475.5" width="4" height="13" fill="#5cd65c" stroke="#2c8a2c"/><path d="M678.5 473.0V481.0" stroke="#2c8a2c"/><rect x="676.5" y="473.5" width="4" height="3" fill="#5cd65c" stroke="#2c8a2c"/><path d="M684.5 467.0V476.0" stroke="#a83030"/><rect x="682" y="472" width="5" height="2" fill="#a83030"/><path d="M690.5 464.0V476.0" stroke="#2c8a2c"/><rect x="688.5" y="470.5" width="4" height="4" fill="#5cd65c" stroke="#2c8a2c"/><path d="M696.5 457.0V472.5" stroke="#2c8a2c"/><rect x="694.5" y="466.5" width="4" height="4" fill="#5cd65c" stroke="#2c8a2c"/><path d="M702.5 461.0V470.0" stroke="#a83030"/><rect x="700.5" y="466.5" width="4" height="3" fill="#e86c6c" stroke="#a83030"/><path d="M708.5 463.0V473.5" stroke="#2c8a2c"/><rect x="706.5" y="466.5" width="4" height="2" fill="#5cd65c" stroke="#2c8a2c"/><rect x="711.5" y="466.5" width="4" height="9" fill="#e86c6c" stroke="#a83030"/><path d="M719.5 472.0V478.5" stroke="#a83030"/><rect x="717.5" y="474.5" width="4" height="4" fill="#e86c6c" stroke="#a83030"/><path d="M725.5 475.0V481.0" stroke="#a83030"/><rect x="723" y="477" width="5" height="2" fill="#a83030"/><path d="M731.5 479.0V491.6" stroke="#a83030"/><rect x="729.5" y="479.5" width="4" height="10" fill="#e86c6c" stroke="#a83030"/><path d="M737.5 487.0V496.6" stroke="#a83030"/><rect x="735.5" y="489.5" width="4" height="3" fill="#e86c6c" stroke="#a83030"/><path d="M742.5 491.0V499.0" stroke="#a83030"/><rect x="740" y="491" width="5" height="1" fill="#a83030"/><path d="M748.5 492.0V508.7" stroke="#a83030"/><rect x="746.5" y="492.5" width="4" height="12" fill="#e86c6c" stroke="#a83030"/><rect x="752.5" y="504.5" width="4" height="10" fill="#e86c6c" stroke="#a83030"/><path d="M760.5 505.0V515.5" stroke="#2c8a2c"/><rect x="758.5" y="511.5" width="4" height="3" fill="#5cd65c" stroke="#2c8a2c"/><path d="M766.5 508.0V517.5" stroke="#2c8a2c"/><rect x="764.5" y="508.5" width="4" height="4" fill="#5cd65c" stroke="#2c8a2c"/><path d="M772.5 504.0V513.0" stroke="#a83030"/><rect x="770.5" y="510.5" width="4" height="3" fill="#e86c6c" stroke="#a83030"/><path d="M777.5 500.0V513.7" stroke="#2c8a2c"/><rect x="775.5" y="502.5" width="4" height="10" fill="#5cd65c" stroke="#2c8a2c"/><path d="M783.5 498.0V511.0" stroke="#a83030"/><rect x="781.5" y="502.5" width="4" height="9" fill="#e86c6c" stroke="#a83030"/><rect x="787.5" y="510.5" width="4" height="6" fill="#e86c6c" stroke="#a83030"/><path d="M795.5 514.0V519.0" stroke="#a83030"/><rect x="793.5" y="515.5" width="4" height="3" fill="#e86c6c" stroke="#a83030"/><rect x="799.5" y="518.5" width="4" height="6" fill="#e86c6c" stroke="#a83030"/><path d="M806.5 524.0V550.0" stroke="#a83030"/><rect x="804.5" y="524.5" width="4" height="18" fill="#e86c6c" stroke="#a83030"/><path d="M812.5 540.0V549.0" stroke="#a83030"/><rect x="810.5" y="542.5" width="4" height="4" fill="#e86c6c" stroke="#a83030"/><path d="M818.5 542.0V552.8" stroke="#a83030"/><rect x="816" y="545" width="5" height="1" fill="#a83030"/><rect x="822.5" y="537.5" width="4" height="9" fill="#5cd65c" stroke="#2c8a2c"/><path d="M830.5 529.0V540.0" stroke="#2c8a2c"/><rect x="828.5" y="535.5" width="4" height="4" fill="#5cd65c" stroke="#2c8a2c"/><path d="M835.5 533.0V536.0" stroke="#a83030"/><rect x="833" y="534" width="5" height="2" fill="#a83030"/><rect x="839" y="534" width="5" height="2" fill="#2c8a2c"/><path d="M847.5 533.0V535.5" stroke="#a83030"/><rect x="845" y="534" width="5" height="1" fill="#a83030"/><path d="M853.5 533.8V536.5" stroke="#a83030"/><rect x="851" y="534" width="5" height="2" fill="#a83030"/><path d="M859.5 533.1V535.8" stroke="#a83030"/><rect x="857" y="533" width="5" height="2" fill="#a83030"/><path d="M865.5 533.4V536.1" stroke="#2c8a2c"/><rect x="863" y="533" width="5" height="2" fill="#2c8a2c"/><rect x="868" y="533" width="5" height="2" fill="#a83030"/><rect x="874" y="533" width="5" height="2" fill="#a83030"/><rect x="880" y="533" width="5" height="2" fill="#a83030"/><rect x="886" y="533" width="5" height="2" fill="#2c8a2c"/><rect x="892" y="533" width="5" height="2" fill="#2c8a2c"/><rect x="897" y="533" width="5" height="2" fill="#2c8a2c"/><rect x="903" y="534" width="5" height="2" fill="#2c8a2c"/><rect x="909.5" y="510.5" width="4" height="24" fill="#5cd65c" stroke="#2c8a2c"/><path d="M917.5 504.0V518.0" stroke="#2c8a2c"/><rect x="915.5" y="504.5" width="4" height="6" fill="#5cd65c" stroke="#2c8a2c"/><path d="M923.5 499.0V508.0" stroke="#a83030"/><rect x="921.5" y="504.5" width="4" height="2" fill="#e86c6c" stroke="#a83030"/><rect x="927.5" y="506.5" width="4" height="7" fill="#e86c6c" stroke="#a83030"/><path d="M934.5 510.0V513.0" stroke="#2c8a2c"/><rect x="932" y="511" width="5" height="1" fill="#2c8a2c"/><path d="M940.5 503.0V512.0" stroke="#2c8a2c"/><rect x="938.5" y="507.5" width="4" height="5" fill="#5cd65c" stroke="#2c8a2c"/><path d="M946.5 508.0V515.0" stroke="#a83030"/><rect x="944.5" y="508.5" width="4" height="4" fill="#e86c6c" stroke="#a83030"/><path d="M952.5 509.0V515.0" stroke="#2c8a2c"/><rect x="950.5" y="509.5" width="4" height="4" fill="#5cd65c" stroke="#2c8a2c"/><path d="M958.5 503.0V511.0" stroke="#2c8a2c"/><rect x="956.5" y="506.5" width="4" height="4" fill="#5cd65c" stroke="#2c8a2c"/><path d="M963.5 500.0V515.0" stroke="#a83030"/><rect x="961.5" y="506.5" width="4" height="7" fill="#e86c6c" stroke="#a83030"/><rect x="967.5" y="513.5" width="4" height="9" fill="#e86c6c" stroke="#a83030"/><path d="M975.5 516.0V522.5" stroke="#2c8a2c"/><rect x="973.5" y="520.5" width="4" height="2" fill="#5cd65c" stroke="#2c8a2c"/><path d="M981.5 516.0V523.0" stroke="#2c8a2c"/><rect x="979.5" y="516.5" width="4" height="4" fill="#5cd65c" stroke="#2c8a2c"/><rect x="985.5" y="510.5" width="4" height="7" fill="#5cd65c" stroke="#2c8a2c"/><rect x="991.5" y="508.5" width="4" height="2" fill="#5cd65c" stroke="#2c8a2c"/><path d="M998.5 502.0V511.0" stroke="#2c8a2c"/><rect x="996.5" y="502.5" width="4" height="6" fill="#5cd65c" stroke="#2c8a2c"/><path d="M1004.5 502.0V508.0" stroke="#a83030"/><rect x="1002.5" y="502.5" width="4" height="3" fill="#e86c6c" stroke="#a83030"/><path d="M1010.5 495.0V505.6" stroke="#2c8a2c"/><rect x="1008.5" y="498.5" width="4" height="8" fill="#5cd65c" stroke="#2c8a2c"/><rect x="1014.5" y="498.5" width="4" height="5" fill="#e86c6c" stroke="#a83030"/><path d="M1022.5 489.0V502.0" stroke="#2c8a2c"/><rect x="1020.5" y="490.5" width="4" height="12" fill="#5cd65c" stroke="#2c8a2c"/><path d="M1027.5 490.0V496.0" stroke="#a83030"/><rect x="1025.5" y="490.5" width="4" height="4" fill="#e86c6c" stroke="#a83030"/><rect x="1031.5" y="493.5" width="4" height="9" fill="#e86c6c" stroke="#a83030"/><path d="M1039.5 502.0V507.0" stroke="#a83030"/><rect x="1037" y="502" width="5" height="1" fill="#a83030"/><rect x="1043.5" y="499.5" width="4" height="5" fill="#5cd65c" stroke="#2c8a2c"/><path d="M1051.5 496.0V500.0" stroke="#2c8a2c"/><rect x="1049" y="498" width="5" height="2" fill="#2c8a2c"/><path d="M1057.5 488.0V497.5" stroke="#2c8a2c"/><rect x="1055.5" y="494.5" width="4" height="4" fill="#5cd65c" stroke="#2c8a2c"/><path d="M1062.5 494.0V503.0" stroke="#a83030"/><rect x="1060" y="494" width="5" height="2" fill="#a83030"/><path d="M1068.5 496.0V501.0" stroke="#a83030"/><rect x="1066.5" y="496.5" width="4" height="4" fill="#e86c6c" stroke="#a83030"/><path d="M1074.5 497.0V500.5" stroke="#2c8a2c"/><rect x="1072" y="498" width="5" height="1" fill="#2c8a2c"/><path d="M1080.5 498.5V504.0" stroke="#a83030"/><rect x="1078.5" y="498.5" width="4" height="6" fill="#e86c6c" stroke="#a83030"/><path d="M1086.5 498.0V503.8" stroke="#a83030"/><rect x="1084" y="503" width="5" height="1" fill="#a83030"/><path d="M1091.5 501.0V505.0" stroke="#2c8a2c"/><rect x="1089.5" y="501.5" width="4" height="3" fill="#5cd65c" stroke="#2c8a2c"/><path d="M1097.5 497.0V500.0" stroke="#2c8a2c"/><rect x="1095" y="498" width="5" height="2" fill="#2c8a2c"/><rect x="1101.5" y="492.5" width="4" height="6" fill="#5cd65c" stroke="#2c8a2c"/><rect x="1107.5" y="492.5" width="4" height="6" fill="#e86c6c" stroke="#a83030"/><path d="M1115.5 498.0V503.0" stroke="#a83030"/><rect x="1113" y="498" width="5" height="2" fill="#a83030"/><path d="M1121.5 502.0V508.0" stroke="#a83030"/><rect x="1119.5" y="502.5" width="4" height="4" fill="#e86c6c" stroke="#a83030"/><rect x="1124.5" y="505.5" width="4" height="6" fill="#e86c6c" stroke="#a83030"/><path d="M1132.5 508.5V512.0" stroke="#a83030"/><rect x="1130" y="510" width="5" height="1" fill="#a83030"/><path d="M1138.5 510.0V516.0" stroke="#a83030"/><rect x="1136" y="510" width="5" height="2" fill="#a83030"/><path d="M1144.5 510.0V515.0" stroke="#2c8a2c"/><rect x="1142" y="511" width="5" height="1" fill="#2c8a2c"/><rect x="1148.5" y="510.5" width="4" height="3" fill="#e86c6c" stroke="#a83030"/><rect x="1153.5" y="508.5" width="4" height="2" fill="#5cd65c" stroke="#2c8a2c"/><rect x="1159" y="507" width="5" height="2" fill="#2c8a2c"/><rect x="1165" y="507" width="5" height="1" fill="#a83030"/><path d="M1173.5 507.5V510.0" stroke="#a83030"/><rect x="1171" y="508" width="5" height="1" fill="#a83030"/><rect x="1177" y="510" width="5" height="1" fill="#2c8a2c"/><rect x="1182" y="510" width="5" height="1" fill="#a83030"/><path d="M1190.5 510.0V513.0" stroke="#a83030"/><rect x="1188" y="510" width="5" height="1" fill="#a83030"/><rect x="1194" y="511" width="5" height="1" fill="#2c8a2c"/><path d="M1470.5 558.0V564.0" stroke="#2c8a2c"/><rect x="1468" y="558" width="5" height="2" fill="#2c8a2c"/></g></svg><!-- pane tabs -->
<div class="a" style="left:5px;top:97px;width:167px;height:17px;background:linear-gradient(#dcebf2,#b4cdd9);border-right:1px solid #8ea7b3;border-bottom:1px solid #8ea7b3"></div>
<div class="t" style="left:8px;top:100px;color:#111;letter-spacing:-0.15px">Equity curve: test_time</div>
<div class="a" style="left:5px;top:181px;width:204px;height:17px;background:linear-gradient(#dcebf2,#b4cdd9);border-right:1px solid #8ea7b3;border-bottom:1px solid #8ea7b3"></div>
<div class="t" style="left:8px;top:184px;color:#111">ProBacktest - Variables: test_time</div>
<div class="a" style="left:5px;top:403px;width:116px;height:17px;background:linear-gradient(#dcebf2,#b4cdd9);border-right:1px solid #8ea7b3;border-bottom:1px solid #8ea7b3"></div>
<div class="t" style="left:8px;top:406px;color:#111">Price</div>
<div class="a" style="left:5px;top:642px;width:113px;height:17px;background:linear-gradient(#dcebf2,#b4cdd9);border-right:1px solid #8ea7b3;border-bottom:1px solid #8ea7b3"></div>
<div class="t" style="left:8px;top:645px;color:#111">MyIndicator</div>
<svg style="left:0;top:0" width="1920" height="1080" viewBox="0 0 1920 1080">
<defs>
<g id="wr"><path d="M1.3 12.3L7 6.8V1.6H10.4V4.7H13.4V8H9.6L3.6 13.6Q2.3 14.4 1.3 12.3Z" fill="#fff" stroke="#111" stroke-width="1.4" stroke-linejoin="round"/></g>
<g id="wn"><rect x="0.7" y="0.7" width="11.6" height="11.6" rx="1.5" fill="#fff" stroke="#111" stroke-width="1.4"/><rect x="1" y="1" width="11" height="2.6" fill="#111"/></g>
<g id="cl"><circle cx="6.5" cy="6.5" r="6.3" fill="#3a3a3a"/><path d="M4 4L9 9M9 4L4 9" stroke="#fff" stroke-width="2"/></g>
</defs>
<use href="#wr" x="120" y="97"/><use href="#wn" x="138" y="98"/><use href="#cl" x="155" y="98"/>
<use href="#wn" x="175" y="182"/><use href="#cl" x="192" y="182"/>
<use href="#wr" x="35" y="403"/><use href="#wn" x="53" y="404"/><use href="#cl" x="70" y="404"/>
<path d="M87.5 404.5H96L98.5 407V415.5H87.5Z" fill="#f4f8fc" stroke="#a4b8cc"/><path d="M92 406.5H94V410.5H97L93 414.5L89 410.5H92Z" fill="#e23030"/>
<path d="M104.5 404.5H113L115.5 407V415.5H104.5Z" fill="#f4f8fc" stroke="#a4b8cc"/><path d="M109 413.5H111V410.5H114L110 406.5L106 410.5H109Z" fill="#22b022"/>
<use href="#wr" x="66" y="642"/><use href="#wn" x="84" y="643"/><use href="#cl" x="101" y="643"/>
</svg>
<!-- equity label -->
<svg style="left:0;top:0" width="1920" height="200" viewBox="0 0 1920 200"><path d="M726 137.5H806" stroke="#86acec" stroke-width="2.6"/></svg>
<div class="a" style="left:602px;top:127px;width:124px;height:20px;background:#fbfcff;border:1px solid #6f9ee0;border-radius:3px"></div>
<div class="t" style="left:605px;top:132px;color:#5d8fd8">Equity curve&nbsp;&nbsp;&nbsp;10,000.00</div>
<!-- show label -->
<svg style="left:0;top:0" width="1920" height="1080" viewBox="0 0 1920 1080">
<path d="M726 361.5H806" stroke="#111" stroke-width="1"/>
<circle cx="806.5" cy="361.5" r="3.3" fill="#fff" stroke="#111" stroke-width="1.2"/>
<path d="M726 542.5H806" stroke="#6c7f8a" stroke-width="1"/>
<circle cx="806.5" cy="542.5" r="3.3" fill="#fff" stroke="#111" stroke-width="1.2"/>
<path d="M726 855.5H806" stroke="#111" stroke-width="1"/>
<circle cx="806.5" cy="855.5" r="3.3" fill="#fff" stroke="#111" stroke-width="1.2"/>
</svg>
<div class="a" style="left:649px;top:352px;width:77px;height:19px;background:#fff;border:1px solid #222;border-radius:3px"></div>
<div class="t" style="left:652px;top:356px;color:#111">show</div><div class="t" style="left:680px;width:43px;text-align:right;top:356px;color:#111">33,500</div>
<div class="a" style="left:652px;top:846px;width:74px;height:19px;background:#fff;border:1px solid #222;border-radius:3px"></div>
<div class="t" style="left:655px;top:850px;color:#111">time</div><div class="t" style="left:680px;width:43px;text-align:right;top:850px;color:#111">113,500</div>
<!-- tooltip -->
<div class="a" style="left:546px;top:490px;width:180px;height:104px;background:rgba(240,243,252,0.88);border:1px solid #8a98a4;border-radius:4px"></div>
<div class="t" style="left:549px;top:493px;line-height:14px;color:#111">Open<br>High<br>Low<br>Close<br>High-Low (0.60%)<br><span style="color:#a02020">Var. / prev. day (-0.96%)<br>Var. / prev. unit (-0.41%)</span></div>
<div class="t" style="left:640px;width:83px;text-align:right;top:493px;line-height:14px;color:#111">26,783.5<br>26,783.5<br>26,624.0<br>26,674.0<br>+159.5<br><span style="color:#a02020">-259.1<br>-109.0</span></div>
<div class="t" style="left:7px;top:627px;color:#111">&copy; IT-Finance.com&nbsp; <i>Data is indicative</i></div>
<!-- right axis -->
<div class="a" style="left:1864px;top:97px;width:52px;height:898px;background:#fff"></div>
<svg style="left:0;top:0" width="1920" height="1080" viewBox="0 0 1920 1080">
<path d="M1864 620.5H1868M1864 679.5H1868M1864 726.5H1868M1864 821.5H1868M1864 868.5H1868M1864 915.5H1868" stroke="#555"/>
<path d="M1864 590.5H1868M1864 779.5H1868" stroke="#111" stroke-width="1.4"/>
<path d="M1863.5 97V975" stroke="#78878e"/>
</svg>
<div class="a" style="left:1868px;top:582px;width:37px;height:16px;background:#f5f520;border:1px solid #a0a040"></div>
<div class="t" style="left:1870px;top:585px;color:#111">26,380</div>
<div class="t" style="left:1870px;top:615px;color:#111">26,200</div>
<div class="t" style="left:1870px;top:674px;color:#111">300,000</div>
<div class="t" style="left:1870px;top:721px;color:#111">250,000</div>
<div class="a" style="left:1868px;top:771px;width:43px;height:16px;background:#eef4f8;border:1px solid #6f8a9a"></div>
<div class="t" style="left:1870px;top:774px;color:#111">194,256</div>
<div class="t" style="left:1870px;top:816px;color:#111">150,000</div>
<div class="t" style="left:1870px;top:863px;color:#111">100,000</div>
<div class="t" style="left:1870px;top:910px;color:#111">50,000</div>
<!-- x axis -->
<div class="a" style="left:5px;top:975px;width:1910px;height:20px;background:#fff"></div>
<svg style="left:0;top:0" width="1920" height="1080" viewBox="0 0 1920 1080"><path d="M5 974.5H1863" stroke="#78878e"/><path d="M74.5 975V978.5M143.5 975V978.5M213.5 975V978.5M283.5 975V978.5M353.5 975V978.5M422.5 975V978.5M492.5 975V978.5M562.5 975V978.5M632.5 975V978.5M702.5 975V978.5M772.5 975V978.5M841.5 975V978.5M911.5 975V978.5M981.5 975V978.5M1051.5 975V978.5M1120.5 975V978.5M1190.5 975V978.5M1260.5 975V978.5M1330.5 975V978.5M1400.5 975V978.5M1470.5 975V978.5M1539.5 975V978.5M1609.5 975V978.5M1679.5 975V978.5M1749.5 975V978.5M1818.5 975V978.5M770.5 975V978.5M840.5 975V978.5" stroke="#666"/></svg>
<div class="t" style="left:44px;width:60px;text-align:center;top:982px;color:#111">01:00</div>
<div class="t" style="left:113px;width:60px;text-align:center;top:982px;color:#111">02:00</div>
<div class="t" style="left:183px;width:60px;text-align:center;top:982px;color:#111">03:00</div>
<div class="t" style="left:253px;width:60px;text-align:center;top:982px;color:#111">04:00</div>
<div class="t" style="left:323px;width:60px;text-align:center;top:982px;color:#111">05:00</div>
<div class="t" style="left:392px;width:60px;text-align:center;top:982px;color:#111">06:00</div>
<div class="t" style="left:462px;width:60px;text-align:center;top:982px;color:#111">07:00</div>
<div class="t" style="left:532px;width:60px;text-align:center;top:982px;color:#111">08:00</div>
<div class="t" style="left:602px;width:60px;text-align:center;top:982px;color:#111">09:00</div>
<div class="t" style="left:672px;width:60px;text-align:center;top:982px;color:#111">10:00</div>
<div class="t" style="left:881px;width:60px;text-align:center;top:982px;color:#111">13:00</div>
<div class="t" style="left:951px;width:60px;text-align:center;top:982px;color:#111">14:00</div>
<div class="t" style="left:1021px;width:60px;text-align:center;top:982px;color:#111">15:00</div>
<div class="t" style="left:1090px;width:60px;text-align:center;top:982px;color:#111">16:00</div>
<div class="t" style="left:1160px;width:60px;text-align:center;top:982px;color:#111">17:00</div>
<div class="t" style="left:1230px;width:60px;text-align:center;top:982px;color:#111">18:00</div>
<div class="t" style="left:1300px;width:60px;text-align:center;top:982px;color:#111">19:00</div>
<div class="t" style="left:1370px;width:60px;text-align:center;top:982px;color:#111">20:00</div>
<div class="t" style="left:1440px;width:60px;text-align:center;top:982px;color:#111">21:00</div>
<div class="t" style="left:1509px;width:60px;text-align:center;top:982px;color:#111">22:00</div>
<div class="t" style="left:1579px;width:60px;text-align:center;top:982px;color:#111">23:00</div>
<div class="t" style="left:1649px;width:60px;text-align:center;top:982px;color:#111">00:00</div>
<div class="t" style="left:1719px;width:60px;text-align:center;top:982px;color:#111">01:00</div>
<div class="t" style="left:1788px;width:60px;text-align:center;top:982px;color:#111">02:00</div>
<svg style="left:0;top:0" width="1920" height="1080" viewBox="0 0 1920 1080"><path d="M806.5 975V979" stroke="#111"/></svg>
<div class="a" style="left:751px;top:979px;width:112px;height:16px;background:#f5f520;border:1px solid #a0a040"></div>
<div class="t" style="left:751px;top:982px;width:112px;text-align:center;letter-spacing:-0.25px;color:#111">Fri 07-Sep-2018 11:30</div>
<!-- bottom bar -->
<div class="a" style="left:0;top:996px;width:1920px;height:34px;background:linear-gradient(#b9d1dc,#a2bfcc)"></div>
<div class="a" style="left:0;top:996px;width:1px;height:33px;background:#7d9bab"></div>
<div class="a" style="left:1px;top:996px;width:1px;height:33px;background:#d4e8f0"></div>
<div class="a" style="left:5px;top:1001px;width:55px;height:22px;background:#2c8fdb;border:1px solid #3a7fc0;border-radius:3px"></div>
<svg style="left:9px;top:1005px" width="15" height="15" viewBox="0 0 15 15"><path d="M11.5 3L3.5 7.5L11.5 12" stroke="#fff" stroke-width="1.5" fill="none"/><circle cx="11.5" cy="3" r="2.5" fill="#fff"/><circle cx="3.5" cy="7.5" r="2.5" fill="#fff"/><circle cx="11.5" cy="12" r="2.5" fill="#fff"/></svg>
<div class="t" style="left:28px;top:1007px;font-size:11px;letter-spacing:0.2px;color:#fff">Share</div>
<svg style="left:70px;top:1004px" width="16" height="18" viewBox="0 0 16 18"><rect x="1.5" y="1" width="7" height="9" rx="3.5" fill="#fff" stroke="#111" stroke-width="1.6"/><rect x="1.5" y="8" width="7" height="9" rx="3.5" fill="#fff" stroke="#111" stroke-width="1.6"/><path d="M5 3V14" stroke="#111" stroke-width="1.4"/><path d="M10 13H16L13 16Z" fill="#111"/></svg>
<svg style="left:97px;top:1005px" width="13" height="15" viewBox="0 0 13 15"><rect x="0.7" y="0.7" width="11.6" height="13.6" fill="#fff" stroke="#111" stroke-width="1.4"/><path d="M2 5L9 2M2 8L11 4M2 11L11 7" stroke="#111" stroke-width="1.2"/><path d="M8 1.5H12V5Z" fill="#e07070"/><path d="M1.5 14V10L5 14Z" fill="#40b040"/></svg>
<svg style="left:124px;top:1005px" width="16" height="16" viewBox="0 0 16 16"><rect x="0" y="0" width="8.5" height="16" fill="#3a8a3a"/><rect x="8.5" y="0" width="7.5" height="16" fill="#a86060"/><path d="M1 2H8M2 5H4M1 8H8M2 11H4M1 14H8" stroke="#5ed85e" stroke-width="2"/><path d="M4.5 5H8M4.5 11H8" stroke="#8ac88a" stroke-width="2"/><path d="M9 2H12M9 5H15M9 8H11M9 11H15M9 14H11" stroke="#f0a0a0" stroke-width="2"/><path d="M12.5 0V3M15.5 3V16M11.5 6.5V9.5M11.5 12.5V16" stroke="#d9e6ec" stroke-width="1"/><path d="M0 3.5H1.5M0 9.5H1.5" stroke="#d9e6ec" stroke-width="1.2"/></svg>
<div class="a" style="left:147px;top:1005px;width:1657px;height:16px;background:#a4bcc8;border:1px solid #8aa4b0;border-radius:3px"></div>
<div class="a" style="left:147px;top:1005px;width:16px;height:16px;background:linear-gradient(#d7e7ee,#b3cbd6);border:1px solid #8aa4b0;border-radius:3px"></div>
<svg style="left:152px;top:1009px" width="6" height="8"><path d="M5 0V8L0 4Z" fill="#111"/></svg>
<div class="a" style="left:1525px;top:1005px;width:102px;height:16px;background:linear-gradient(#cfe2ea,#abc6d2);border:1px solid #8aa4b0;border-radius:3px"></div>
<svg style="left:1572px;top:1009px" width="8" height="8"><path d="M0 1.5H8M0 4H8M0 6.5H8" stroke="#778" stroke-width="0.9"/></svg>
<div class="a" style="left:1787px;top:1005px;width:17px;height:16px;background:linear-gradient(#d7e7ee,#b3cbd6);border:1px solid #8aa4b0;border-radius:3px"></div>
<svg style="left:1793px;top:1009px" width="6" height="8"><path d="M0 0V8L5 4Z" fill="#111"/></svg>
<svg style="left:1810px;top:1003px" width="18" height="20" viewBox="0 0 18 20"><rect x="10" y="3" width="6" height="13" fill="#50c850" stroke="#2a8a2a"/><path d="M13 0V19" stroke="#2a8a2a"/><rect x="2" y="10" width="5" height="7" fill="#e08080" stroke="#a33"/><path d="M2 18L9 11Q8 7 11 6L13 6L12 8L14 9L15 8Q15 11 11 12L4 19Z" fill="#fff" stroke="#333" stroke-width="0.9"/></svg>
<svg style="left:1836px;top:1003px" width="20" height="20" viewBox="0 0 20 20"><circle cx="8" cy="8" r="5.5" fill="#e8e8e8" stroke="#111" stroke-width="1.6"/><path d="M12 12L17 17" stroke="#111" stroke-width="2.8" stroke-linecap="round"/><path d="M17 1V9M15 3L17 1L19 3M15 7L17 9L19 7M1 17H9M3 15L1 17L3 19M7 15L9 17L7 19" stroke="#1a50d8" stroke-width="1.2" fill="none"/></svg>
<svg style="left:1865px;top:1004px" width="18" height="18" viewBox="0 0 18 18"><circle cx="7" cy="7" r="5.2" fill="#f4f4f4" stroke="#111" stroke-width="1.6"/><path d="M11 11L16.5 16.5" stroke="#111" stroke-width="2.8" stroke-linecap="round"/><path d="M4.5 7H9.5" stroke="#1a50d8" stroke-width="2"/></svg>
<svg style="left:1893px;top:1004px" width="18" height="18" viewBox="0 0 18 18"><circle cx="7" cy="7" r="5.2" fill="#f4f4f4" stroke="#111" stroke-width="1.6"/><path d="M11 11L16.5 16.5" stroke="#111" stroke-width="2.8" stroke-linecap="round"/><path d="M4.5 7H9.5M7 4.5V9.5" stroke="#1a50d8" stroke-width="2"/></svg>
<!-- ========== Backtesting window ========== -->
<div class="a" style="left:1196px;top:0;width:724px;height:559px;background:#9dbbc9;border-left:1px solid #6f8e9d;border-bottom:1px solid #6f8e9d"></div>
<div class="a" style="left:1197px;top:0;width:723px;height:24px;background:linear-gradient(#bcd8e2,#9ebdc9)"></div>
<div class="a" style="left:1197px;top:0;width:723px;height:1px;background:#62808d"></div>
<div class="a" style="left:1197px;top:1px;width:722px;height:1px;background:#d2ecf6"></div>
<div class="a" style="left:1197px;top:0;width:1px;height:558px;background:#d2e6ee"></div>
<div class="a" style="left:1918px;top:1px;width:1px;height:557px;background:#c6dde6"></div>
<div class="a" style="left:1919px;top:0;width:1px;height:559px;background:#62808d"></div>
<div class="a" style="left:1198px;top:24px;width:718px;height:1px;background:#6f8c98"></div>
<div class="a" style="left:1198px;top:25px;width:718px;height:1px;background:#cfeaf5"></div>
<svg style="left:1200px;top:4px" width="17" height="18" viewBox="0 0 17 18"><line x1="4.5" y1="6" x2="4.5" y2="17" stroke="#b83030"/><rect x="1.5" y="8.5" width="6" height="6.5" fill="#f27a7a" stroke="#b83030"/><line x1="12.5" y1="1" x2="12.5" y2="17" stroke="#229922"/><rect x="9.5" y="4.5" width="6" height="8.5" fill="#62e062" stroke="#229922"/></svg>
<div class="t" style="left:1218px;top:8px;color:#111;letter-spacing:-0.18px">Backtesting &amp; Automatic Trading - Trading system creation&nbsp; -</div>
<div class="a" style="left:1514px;top:3px;width:166px;height:21px;background:#fff;border:1px solid #b9cbd4;border-radius:3px"></div>
<div class="t" style="left:1517px;top:8px;color:#111">test_time</div>
<svg style="left:1685px;top:4px" width="20" height="19" viewBox="0 0 20 19"><path d="M1.5 1.5H9L12 4.5V17.5H1.5Z" fill="#f4f8fa" stroke="#8c9ca6"/><path d="M3 6H8M3 8.5H7M3 11H6M3 13.5H6" stroke="#8c9ca6"/><circle cx="13" cy="12.5" r="5.5" fill="#f4f8fa" stroke="#8c9ca6" stroke-width="1.2"/><text x="10.5" y="16" font-family="Liberation Sans" font-weight="bold" font-size="9" fill="#7a8a94">?</text></svg>
<svg style="left:1870px;top:6px" width="48" height="14" viewBox="0 0 48 14"><g stroke="#e2f2f8" stroke-width="1.5" fill="none" transform="translate(0,1.2)"><path d="M4 9.8H13"/><rect x="19.5" y="3" width="8" height="7.5"/><path d="M35 2.5L43 10.5M43 2.5L35 10.5"/></g><g stroke="#5f7d89" fill="none"><path d="M4 9.8H13" stroke-width="1.6"/><rect x="19.5" y="2.8" width="8" height="7.5" stroke-width="1.4"/><path d="M19.5 3.2H27.5" stroke-width="2"/><path d="M35 2.5L43 10.5M43 2.5L35 10.5" stroke-width="1.8"/></g></svg>
<!-- tabs -->
<div class="a" style="left:1209px;top:39px;width:109px;height:18px;background:linear-gradient(#fdfefe,#e6eef2);border:1px solid #c4d3db;border-bottom:none;border-radius:3px 3px 0 0"></div>
<div class="t" style="left:1218px;top:42px;color:#9aa6ad;letter-spacing:-0.18px">Simplified creation</div>
<div class="a" style="left:1318px;top:36px;width:144px;height:21px;background:linear-gradient(#4d95e6,#3a7fd4);border:1px solid #3470c0;border-bottom:none;border-radius:3px 3px 0 0"></div>
<div class="t" style="left:1329px;top:41px;color:#fff;letter-spacing:-0.17px">Creation by programming</div>
<!-- left panel -->
<div class="a" style="left:1208px;top:56px;width:434px;height:492px;background:#d1dfe6;border:1px solid #8ea6b2"></div>
<div class="a" style="left:1214px;top:62px;width:19px;height:19px;background:linear-gradient(#fff,#e9eff2);border:1px solid #8a9aa4;border-radius:3px"></div>
<svg style="left:1216px;top:64px" width="15" height="15" viewBox="0 0 15 15"><path d="M1.5 12.5L7.2 7V1.8H10.6V5H13.6V8.2H9.8L3.8 13.8Q2.5 14.6 1.5 12.5Z" fill="#fff" stroke="#111" stroke-width="1.3" stroke-linejoin="round"/></svg>
<div class="t" style="left:1238px;top:67px;font-weight:bold;color:#111;letter-spacing:0.25px">Variable optimization:</div>
<div class="t" style="left:1365px;top:67px;color:#2233cc;text-decoration:underline">add</div>
<!-- editor toolbar -->
<div class="a" style="left:1215px;top:86px;width:422px;height:33px;background:linear-gradient(#eef3f6,#d6e2e8);border:1px solid #97abb5"></div>
<div id="tb1"></div>
<!-- code area -->
<div class="a" style="left:1215px;top:118px;width:422px;height:424px;background:#fff;border:1px solid #97abb5"></div>
<div class="a" style="left:1216px;top:119px;width:52px;height:422px;background:#cfdde4;border-right:1px solid #97abb5"></div>
<div class="a" style="left:1268px;top:430px;width:367px;height:24px;background:#e5e5e5"></div>
<div class="t" style="left:1216px;top:119px;width:47px;text-align:right;font-size:16px;line-height:24px;color:#111">1<br><br>2<br>3<br>4<br>5<br>6<br>7<br>8<br>9<br>10<br><br><br>11</div>
<div class="t" style="left:1268px;top:120px;font-family:'Liberation Mono',monospace;font-size:16.67px;line-height:24px;color:#1a1a1a;white-space:pre"><i style="color:#a6a6a6">// Conditions to enter long
positions</i>
<span style="color:#3d2eaf">if</span> show=<span style="color:#e040e0">99999999</span> <span style="color:#3d2eaf">then</span>
   <span style="color:#3d2eaf">buy</span> <span style="color:#e040e0">2</span> <span style="color:#3d2eaf">contract</span> <span style="color:#3d2eaf">at</span> <span style="color:#3d2eaf">market</span>
<span style="color:#3d2eaf">endif</span>


show=<span style="color:#3d2eaf">time</span>

<span style="color:#3d2eaf">graph</span> show
<i style="color:#a6a6a6">// Stops and targets : Enter your
protection stops and profit targets
here</i></div>
<!-- right panel -->
<div class="a" style="left:1652px;top:113px;width:257px;height:435px;background:#d1dfe6;border:1px solid #8ea6b2;border-top:none;border-radius:0 0 4px 4px"></div>
<div class="a" style="left:1652px;top:37px;width:129px;height:78px;background:linear-gradient(#eef3f6,#d6e3e9 60%,#d1dfe6);border:1px solid #8ea6b2;border-bottom:none;border-radius:4px 0 0 0"></div>
<div class="a" style="left:1781px;top:37px;width:128px;height:78px;background:linear-gradient(#d5e2e8,#b3c8d2);border:1px solid #8ea6b2;border-radius:0 4px 0 0"></div>
<div class="t" style="left:1687px;top:43px;color:#111">ProBacktest</div>
<div class="t" style="left:1800px;top:45px;color:#111">Automatic Trading</div>
<div id="pbimg"></div>
<div class="t" style="left:1671px;top:126px;font-weight:bold;color:#111">Hong Kong HS50 Cash (SD1) - 5 minutes</div>
<div class="t" style="left:1696px;top:152px;color:#111">Initial capital :</div>
<div class="a" style="left:1764px;top:147px;width:70px;height:21px;background:#fff;border:1px solid #98acb6;border-radius:3px"></div>
<div class="t" style="left:1767px;top:152px;color:#111">10000</div>
<div class="t" style="left:1839px;top:152px;color:#111">SGD</div>
<div class="t" style="left:1661px;top:175px;font-weight:bold;color:#111;letter-spacing:0.4px">Estimated brokerage fees</div>
<div class="a" style="left:1665px;top:200px;width:12px;height:12px;background:#fff;border:1px solid #6d7f88"></div>
<div class="t" style="left:1681px;top:200px;color:#111">Order fee :</div>
<div class="a" style="left:1695px;top:225px;width:12px;height:12px;background:#d9e4ea;border:1px solid #9fb0b8"></div>
<div class="t" style="left:1710px;top:225px;color:#98a4aa">Min:</div>
<div class="a" style="left:1695px;top:250px;width:12px;height:12px;background:#d9e4ea;border:1px solid #9fb0b8"></div>
<div class="t" style="left:1710px;top:250px;color:#98a4aa">Max:</div>
<div class="a" style="left:1665px;top:275px;width:12px;height:12px;background:#fff;border:1px solid #6d7f88"></div>
<div class="t" style="left:1681px;top:275px;color:#111">Spread:</div>
<div class="t" style="left:1801px;top:275px;color:#98a4aa">points</div>
<div class="a" style="left:1743px;top:194px;width:55px;height:22px;background:#d3e0e6;border:1px solid #a9b8c0;border-radius:3px"></div>
<div class="t" style="left:1746px;top:200px;color:#9aa6ac">0</div>
<div class="a" style="left:1802px;top:194px;width:95px;height:22px;background:#d3e0e6;border:1px solid #a9b8c0;border-radius:3px"></div>
<div class="t" style="left:1806px;top:200px;color:#9aa6ac">SGD / order</div>
<div class="a" style="left:1877px;top:196px;width:17px;height:17px;border:1px solid #a0b0b8;border-radius:2px"></div>
<svg style="left:1881px;top:202px" width="9" height="6"><path d="M0.5 0.5H8.5L4.5 5Z" fill="none" stroke="#8a9aa2"/></svg>
<div class="a" style="left:1743px;top:219px;width:55px;height:22px;background:#d3e0e6;border:1px solid #a9b8c0;border-radius:3px"></div>
<div class="t" style="left:1746px;top:225px;color:#9aa6ac">0</div>
<div class="a" style="left:1802px;top:219px;width:91px;height:22px;background:#d3e0e6;border:1px solid #a9b8c0;border-radius:3px"></div>
<div class="t" style="left:1806px;top:225px;color:#9aa6ac">SGD / order</div>
<div class="a" style="left:1873px;top:221px;width:17px;height:17px;border:1px solid #a0b0b8;border-radius:2px"></div>
<svg style="left:1877px;top:227px" width="9" height="6"><path d="M0.5 0.5H8.5L4.5 5Z" fill="none" stroke="#8a9aa2"/></svg>
<div class="a" style="left:1743px;top:244px;width:55px;height:22px;background:#d3e0e6;border:1px solid #a9b8c0;border-radius:3px"></div>
<div class="t" style="left:1746px;top:250px;color:#9aa6ac">0</div>
<div class="a" style="left:1802px;top:244px;width:91px;height:22px;background:#d3e0e6;border:1px solid #a9b8c0;border-radius:3px"></div>
<div class="t" style="left:1806px;top:250px;color:#9aa6ac">SGD / order</div>
<div class="a" style="left:1873px;top:246px;width:17px;height:17px;border:1px solid #a0b0b8;border-radius:2px"></div>
<svg style="left:1877px;top:252px" width="9" height="6"><path d="M0.5 0.5H8.5L4.5 5Z" fill="none" stroke="#8a9aa2"/></svg>
<div class="a" style="left:1743px;top:270px;width:55px;height:21px;background:#d3e0e6;border:1px solid #a9b8c0;border-radius:3px"></div>
<div class="t" style="left:1771px;top:275px;color:#9aa6ac">2</div>
<svg style="left:1783px;top:273px" width="8" height="15"><path d="M1 5L4 2L7 5M1 10L4 13L7 10" fill="none" stroke="#8a9aa2"/></svg>
<div class="t" style="left:1661px;top:298px;font-weight:bold;color:#111;letter-spacing:0.4px">Time period</div>
<div class="t" style="left:1661px;top:317px;color:#111">Starting date :</div>
<div class="t" style="left:1661px;top:372px;color:#111">Ending date :</div>
<svg style="left:0;top:0" width="1920" height="1080" viewBox="0 0 1920 1080">
<circle cx="1743.5" cy="322.5" r="6" fill="#fff" stroke="#6d7f88"/><circle cx="1743.5" cy="322.5" r="2.3" fill="#111"/>
<circle cx="1743.5" cy="348.5" r="6" fill="#fff" stroke="#6d7f88"/>
<circle cx="1743.5" cy="378.5" r="6" fill="#fff" stroke="#6d7f88"/><circle cx="1743.5" cy="378.5" r="2.3" fill="#111"/>
<circle cx="1743.5" cy="403.5" r="6" fill="#fff" stroke="#6d7f88"/>
<g id="cal"><rect x="1870.5" y="341.5" width="19" height="15" fill="#eef2f5" stroke="#c4d0d6"/><rect x="1870" y="340" width="20" height="4" fill="#b8c8d2"/><path d="M1873 347H1887M1873 350H1887M1873 353H1887M1875 345V356M1879 345V356M1883 345V356" stroke="#d0d8de" stroke-width="0.8"/><rect x="1878" y="349" width="2" height="2" fill="#e08a9a"/></g>
<use href="#cal" y="55"/>
<path d="M1653 428.5H1905" stroke="#8ea6b2"/>
<path d="M1653 429.5H1905" stroke="#e8f0f4"/>
</svg>
<div class="t" style="left:1754px;top:317px;color:#111">Earliest date displayed</div>
<div class="t" style="left:1754px;top:343px;color:#111">11-Sep-2018 19:33:33</div>
<div class="t" style="left:1754px;top:373px;color:#111">Real-time date</div>
<div class="t" style="left:1754px;top:398px;color:#111">11-Sep-2018 19:33:33</div>
<div class="a" style="left:1665px;top:446px;width:12px;height:12px;background:#fff;border:1px solid #6d7f88"></div>
<svg style="left:1665px;top:443px" width="14" height="15"><path d="M2.5 8L5.5 12L12.5 1.5" fill="none" stroke="#111" stroke-width="2"/></svg>
<div class="t" style="left:1681px;top:446px;color:#111;letter-spacing:-0.17px">ProBacktest in tick by tick mode</div>
<svg style="left:1835px;top:445px" width="14" height="13" viewBox="0 0 14 13"><ellipse cx="7" cy="5.5" rx="6.5" ry="5" fill="#3aa0e8"/><ellipse cx="6" cy="4" rx="3.5" ry="2" fill="#a8dcff"/><path d="M8 9L11 12.5L10 9Z" fill="#3aa0e8"/></svg>
<div class="a" style="left:1723px;top:490px;width:12px;height:12px;background:#fff;border:1px solid #6d7f88"></div>
<div class="t" style="left:1739px;top:490px;color:#111">Keep window open</div>
<div class="a" style="left:1705px;top:513px;width:147px;height:24px;background:linear-gradient(#ffffff,#e9eef1);border:1px solid #8fa2ac;border-radius:3px"></div>
<div class="t" style="left:1705px;top:520px;width:147px;text-align:center;color:#111">ProBacktest my system</div>
<!-- ========== ProBuilder window ========== -->
<div class="a" style="left:1180px;top:676px;width:593px;height:273px;background:#9dbbc9;border:1px solid #6f8e9d"></div>
<div class="a" style="left:1181px;top:677px;width:591px;height:24px;background:linear-gradient(#bcd8e2,#9ebdc9)"></div>
<div class="a" style="left:1181px;top:677px;width:591px;height:1px;background:#d2ecf6"></div>
<div class="a" style="left:1181px;top:677px;width:1px;height:271px;background:#d2e6ee"></div>
<div class="a" style="left:1771px;top:677px;width:1px;height:271px;background:#c6dde6"></div>
<div class="a" style="left:1182px;top:701px;width:587px;height:1px;background:#6f8c98"></div>
<div class="a" style="left:1182px;top:702px;width:587px;height:1px;background:#cfeaf5"></div>
<svg style="left:1183px;top:680px" width="17" height="18" viewBox="0 0 17 18"><line x1="4.5" y1="6" x2="4.5" y2="17" stroke="#b83030"/><rect x="1.5" y="8.5" width="6" height="6.5" fill="#f27a7a" stroke="#b83030"/><line x1="12.5" y1="1" x2="12.5" y2="17" stroke="#229922"/><rect x="9.5" y="4.5" width="6" height="8.5" fill="#62e062" stroke="#229922"/></svg>
<div class="t" style="left:1202px;top:684px;color:#111;letter-spacing:-0.15px">ProBuilder - Indicator creation&nbsp; -</div>
<div class="a" style="left:1358px;top:679px;width:165px;height:21px;background:#fff;border:1px solid #b9cbd4;border-radius:3px"></div>
<div class="t" style="left:1361px;top:684px;color:#111">MyIndicator</div>
<svg style="left:1529px;top:680px" width="20" height="19" viewBox="0 0 20 19"><path d="M1.5 1.5H9L12 4.5V17.5H1.5Z" fill="#f4f8fa" stroke="#8c9ca6"/><path d="M3 6H8M3 8.5H7M3 11H6M3 13.5H6" stroke="#8c9ca6"/><circle cx="13" cy="12.5" r="5.5" fill="#f4f8fa" stroke="#8c9ca6" stroke-width="1.2"/><text x="10.5" y="16" font-family="Liberation Sans" font-weight="bold" font-size="9" fill="#7a8a94">?</text></svg>
<svg style="left:1725px;top:682px" width="48" height="14" viewBox="0 0 48 14"><g stroke="#e2f2f8" stroke-width="1.5" fill="none" transform="translate(0,1.2)"><path d="M2 10.3H10"/><rect x="17.5" y="3" width="8" height="7.5"/><path d="M33 2.5L41 10.5M41 2.5L33 10.5"/></g><g stroke="#5f7d89" fill="none"><path d="M2 10.3H10" stroke-width="1.6"/><rect x="17.5" y="2.8" width="8" height="7.5" stroke-width="1.4"/><path d="M17.5 3.2H25.5" stroke-width="2"/><path d="M33 2.5L41 10.5M41 2.5L33 10.5" stroke-width="1.8"/></g></svg>
<div class="a" style="left:1192px;top:712px;width:570px;height:226px;background:#d1dfe6;border:1px solid #8ea6b2;border-radius:4px"></div>
<div class="a" style="left:1198px;top:718px;width:19px;height:19px;background:linear-gradient(#fff,#e9eff2);border:1px solid #8a9aa4;border-radius:3px"></div>
<svg style="left:1200px;top:720px" width="15" height="15" viewBox="0 0 15 15"><path d="M1.5 12.5L7.2 7V1.8H10.6V5H13.6V8.2H9.8L3.8 13.8Q2.5 14.6 1.5 12.5Z" fill="#fff" stroke="#111" stroke-width="1.3" stroke-linejoin="round"/></svg>
<div class="t" style="left:1222px;top:723px;font-weight:bold;color:#111;letter-spacing:0.25px">Variables</div>
<div class="t" style="left:1282px;top:723px;color:#2233cc;text-decoration:underline">add</div>
<div class="a" style="left:1199px;top:742px;width:557px;height:32px;background:linear-gradient(#eef3f6,#d6e2e8);border:1px solid #97abb5"></div>
<div class="a" style="left:1199px;top:773px;width:557px;height:120px;background:#fff;border:1px solid #97abb5"></div>
<div class="a" style="left:1200px;top:774px;width:40px;height:118px;background:#cfdde4;border-right:1px solid #97abb5"></div>
<div class="a" style="left:1241px;top:816px;width:514px;height:21px;background:#e5e5e5"></div>
<div class="t" style="left:1200px;top:776px;width:36px;text-align:right;font-size:15px;line-height:20.8px;color:#111">1<br>2<br>3</div>
<div class="t" style="left:1241px;top:777px;font-family:'Liberation Mono',monospace;font-size:15px;line-height:20.8px;color:#111;white-space:pre;-webkit-text-stroke:0.35px">show=<span style="color:#3d2eaf">time</span>
<span style="color:#3d2eaf">return</span> show <span style="color:#3d2eaf">as</span> <span style="color:#d02020">"time"</span></div>
<div class="a" style="left:1204px;top:909px;width:13px;height:13px;background:#fff;border:1px solid #6d7f88"></div>
<div class="t" style="left:1220px;top:910px;color:#111">Keep window open</div>
<div class="a" style="left:1407px;top:903px;width:138px;height:24px;background:linear-gradient(#ffffff,#e9eef1);border:1px solid #8fa2ac;border-radius:3px"></div>
<div class="t" style="left:1407px;top:910px;width:138px;text-align:center;color:#111">Add indicator to chart</div>
<svg style="left:0;top:0" width="1920" height="1080" viewBox="0 0 1920 1080">
<defs><g id="etb">
<!-- scissors -->
<path d="M1224 95L1231.5 106M1232 95L1224.5 106" stroke="#444" stroke-width="1.1"/>
<circle cx="1224" cy="107.5" r="2.3" fill="none" stroke="#111" stroke-width="1.3"/><circle cx="1232" cy="107.5" r="2.3" fill="none" stroke="#111" stroke-width="1.3"/>
<!-- copy -->
<path d="M1247.5 94.5H1253L1256 97.5V106.5H1247.5Z" fill="#fff" stroke="#b8c0c6"/>
<path d="M1252.5 98.5H1258.5L1262 102V110.5H1252.5Z" fill="#fff" stroke="#b8c0c6"/>
<!-- paste -->
<rect x="1275.5" y="95.5" width="11" height="13" rx="1" fill="#b8701e" stroke="#7a4a10"/><rect x="1278" y="94" width="6" height="3" fill="#6a4010"/>
<path d="M1280.5 99.5H1285.5L1288.5 102.5V108.5H1280.5Z" fill="#fff" stroke="#c8c8c8"/>
<path d="M1303.5 94V109" stroke="#555"/>
<!-- undo redo -->
<path d="M1320 99.5H1326Q1331 99.5 1331 104Q1331 108 1326 108.5" stroke="#8ab2e6" stroke-width="2.4" fill="none"/><path d="M1317 99.5L1322 95V104Z" fill="#8ab2e6"/>
<path d="M1357 99.5H1351Q1346 99.5 1346 104Q1346 108 1351 108.5" stroke="#8ab2e6" stroke-width="2.4" fill="none"/><path d="M1360 99.5L1355 95V104Z" fill="#8ab2e6"/>
<path d="M1373.5 94V109" stroke="#555"/>
<!-- magnifier -->
<circle cx="1392.5" cy="99" r="5.3" fill="#f2f2f2" stroke="#111" stroke-width="1.5"/><path d="M1396.5 103L1403 109.5" stroke="#111" stroke-width="2.4" stroke-linecap="round"/>
<!-- bubble -->
<path d="M1422 93Q1431.5 93 1431.5 100.5Q1431.5 107.5 1422 107.5L1419.5 111.5L1418.5 107Q1412.5 106 1412.5 100.5Q1412.5 93 1422 93Z" fill="#f8f8f8" stroke="#c6c6c6"/>
<text x="1417.5" y="104" font-family="Liberation Sans" font-style="italic" font-size="9" fill="#999">//</text>
<path d="M1443.5 94V109" stroke="#555"/>
<!-- A- A+ -->
<text x="1454" y="110" font-family="Liberation Serif" font-size="19" fill="#222">A</text><rect x="1466.5" y="93.5" width="9" height="3" fill="#fff" stroke="#333"/>
<text x="1481" y="110" font-family="Liberation Serif" font-size="19" fill="#222">A</text><path d="M1496 91.5H1499V94.5H1502V97.5H1499V100.5H1496V97.5H1493V94.5H1496Z" fill="#fff" stroke="#333"/>
<path d="M1513.5 94V109" stroke="#555"/>
<!-- bulb -->
<ellipse cx="1535" cy="99" rx="6" ry="6.5" fill="#fbf07a" stroke="#e6d23a"/><rect x="1532" y="105" width="6" height="5" fill="#e8e8e8" stroke="#bbb"/><path d="M1533 101L1535 98L1537 101V105" stroke="#e0c020" fill="none"/>
<!-- fx -->
<text x="1554" y="108" font-family="Liberation Serif" font-style="italic" font-weight="bold" font-size="18" fill="#111">f</text><text x="1562" y="110" font-family="Liberation Sans" font-weight="bold" font-size="9" fill="#111">x</text>
<!-- help -->
<circle cx="1589" cy="102" r="9.3" fill="#eef2f8" stroke="#9fb0c6"/><circle cx="1589" cy="102" r="7.6" fill="#2a62c0"/><text x="1585" y="107" font-family="Liberation Sans" font-weight="bold" font-size="12" fill="#fff">?</text>
<!-- printer -->
<rect x="1611.5" y="93.5" width="9" height="5" fill="#fff" stroke="#666"/><path d="M1607.5 99.5H1624.5V108.5H1607.5Z" fill="#c8c8c8" stroke="#555"/><path d="M1608 103H1624M1608 106H1624" stroke="#888"/>
</g></defs>
<use href="#etb"/>
<use href="#etb" x="-16" y="656"/>
</svg>
<svg style="left:1660px;top:60px" width="110" height="48" viewBox="1660 60 110 48">
<path d="M1701 90.6L1705.5 92.9L1711.6 89.1L1717.6 81.6L1720.6 82.3L1725.9 75.5L1729 82.3L1732.7 77.8L1738.8 77.8L1744.8 70.2L1749.3 78.5L1755.4 74L1759.2 76.3L1765.2 67.2V100H1701Z" fill="#e0ecd8"/>
<path d="M1765.5 62V101M1701 100.5H1766M1762 70H1766M1762 80H1766M1762 90H1766M1708.5 100V103M1718.5 100V103M1728.5 100V103M1738.5 100V103M1748.5 100V103M1758.5 100V103" stroke="#aab" stroke-width="0.8"/>
<path d="M1701 90.6L1705.5 92.9L1711.6 89.1L1717.6 81.6L1720.6 82.3L1725.9 75.5L1729 82.3L1732.7 77.8L1738.8 77.8L1744.8 70.2L1749.3 78.5L1755.4 74L1759.2 76.3L1765.2 67.2" stroke="#22aa22" stroke-width="2.2" fill="none"/>
<path d="M1724.5 66V70H1722.5L1725.5 73L1728.5 70H1726.5V66Z M1743.5 62V66H1741.5L1744.5 69L1747.5 66H1745.5V62Z" fill="#222"/>
<path d="M1719.5 90V86H1717.5L1720.5 83L1723.5 86H1721.5V90Z M1738.5 86V82H1736.5L1739.5 79L1742.5 82H1740.5V86Z" fill="#fff" stroke="#777" stroke-width="0.7"/>
<rect x="1663.5" y="62.5" width="37" height="41" rx="1.5" fill="#fff" stroke="#2a62c8" stroke-width="1.2"/><rect x="1663.5" y="62.5" width="37" height="5" fill="#3272d6"/>
<path d="M1676 63V103M1688 63V103" stroke="#2a62c8" stroke-width="0.9"/>
<path d="M1666 70H1673M1666 73H1672M1666 76H1673M1666 79H1671M1666 82H1673M1666 85H1672M1666 88H1673M1666 91H1671M1666 94H1673M1666 97H1672M1666 100H1673 M1679 70H1686M1680 73H1686M1679 76H1686M1681 79H1686M1679 82H1686M1680 85H1686M1679 88H1686M1681 91H1686M1679 94H1686M1680 97H1686M1679 100H1686 M1691 70H1698M1692 73H1698M1691 76H1698M1693 79H1698M1691 82H1698M1692 85H1698M1691 88H1698M1693 91H1698M1691 94H1698M1692 97H1698M1691 100H1698" stroke="#777" stroke-width="0.8"/>
</svg>
<svg style="left:1788px;top:60px" width="112" height="48" viewBox="1788 60 112 48">
<path d="M1794.7 90.6L1802.2 92.1L1811.3 90.6L1821.8 90.3L1833.9 94.4L1841.5 89.1L1847.5 81.6L1853.6 77L1856.6 84.6L1861.1 79.3L1868.7 78.5L1873.2 72.5L1877.7 80L1883.8 77L1888.3 78.5L1893.6 69.5V101H1794.7Z" fill="#dfead6"/>
<path d="M1894.5 64V102M1794 101.5H1895M1891 72H1895M1891 82H1895M1891 92H1895M1804.5 101V104M1814.5 101V104M1824.5 101V104M1834.5 101V104M1844.5 101V104M1854.5 101V104M1864.5 101V104M1874.5 101V104M1884.5 101V104" stroke="#aab" stroke-width="0.8"/>
<path d="M1832 77.5H1848" stroke="#666" stroke-width="0.9"/><path d="M1847.5 77.5H1893" stroke="#1a2ab0" stroke-width="1.4"/>
<path d="M1794.7 90.6L1802.2 92.1L1811.3 90.6L1821.8 90.3L1833.9 94.4L1841.5 89.1L1847.5 81.6L1853.6 77L1856.6 84.6L1861.1 79.3L1868.7 78.5L1873.2 72.5L1877.7 80L1883.8 77L1888.3 78.5L1893.6 69.5" stroke="#22aa22" stroke-width="2.2" fill="none"/>
<path d="M1853.5 67V71H1851.5L1854.5 74L1857.5 71H1855.5V67Z M1872.5 63V67H1870.5L1873.5 70L1876.5 67H1874.5V63Z" fill="#e03030"/>
<path d="M1847.5 92V88H1845.5L1848.5 85L1851.5 88H1849.5V92Z M1866.5 89V85H1864.5L1867.5 82L1870.5 85H1868.5V89Z" fill="#22b022"/>
<path d="M1803 68Q1796 67 1795 76" stroke="#e85050" stroke-width="2.6" fill="none"/><path d="M1791.5 74L1798.5 74.5L1794 80Z" fill="#e85050"/>
<path d="M1825 83Q1830 82 1829.5 72" stroke="#3ab83a" stroke-width="2.6" fill="none"/><path d="M1825.5 73L1833.5 73L1829.5 67Z" fill="#3ab83a"/>
<g fill="#2a62c8"><circle cx="1808" cy="75" r="5.3"/><circle cx="1818.5" cy="68.7" r="3.6"/><circle cx="1818.5" cy="81" r="3.6"/></g>
<g stroke="#2a62c8" stroke-width="1.8"><path d="M1808 67.5V82.5M1800.5 75H1815.5M1802.7 69.7L1813.3 80.3M1813.3 69.7L1802.7 80.3"/><path d="M1818.5 63.5V74M1813.3 68.7H1823.7M1814.8 65L1822.2 72.4M1822.2 65L1814.8 72.4"/><path d="M1818.5 75.8V86.2M1813.3 81H1823.7M1814.8 77.3L1822.2 84.7M1822.2 77.3L1814.8 84.7"/></g>
<g fill="#d8e6ee"><circle cx="1808" cy="75" r="2"/><circle cx="1818.5" cy="68.7" r="1.4"/><circle cx="1818.5" cy="81" r="1.4"/></g>
</svg>
<!-- taskbar -->
<div class="a" style="left:0;top:1030px;width:1920px;height:50px;background:#0b1631"></div>
<svg style="left:0;top:1029px" width="1920" height="51" viewBox="0 1029 1920 51">
<path d="M20 1047.5L28.5 1046.3V1054.2H20Z M29.5 1046.1L40 1044.6V1054.2H29.5Z M20 1055.2H28.5V1063.2L20 1062Z M29.5 1055.2H40V1064.8L29.5 1063.3Z" fill="#fff"/>
<circle cx="93" cy="1052" r="6.5" fill="none" stroke="#fff" stroke-width="1.6"/><path d="M88.5 1056.5L80.5 1064.5" stroke="#fff" stroke-width="1.8"/>
<path d="M140 1043.5H149L151 1046H168V1066H140Z" fill="#f0c860"/><path d="M140 1049H168V1066H140Z" fill="#f8dc8a"/><path d="M146 1066V1057H162V1066H158V1060H150V1066Z" fill="#3aa0e8"/>
<rect x="201.5" y="1043.5" width="28" height="21" fill="#111" stroke="#c8c8c8"/><path d="M205 1048H208M209 1050L212 1051H218" stroke="#ccc" stroke-width="0.9"/>
<defs><linearGradient id="ffg" x1="0" y1="1" x2="1" y2="0"><stop offset="0" stop-color="#d8186e"/><stop offset="0.35" stop-color="#ff3a24"/><stop offset="0.7" stop-color="#ffa21a"/><stop offset="1" stop-color="#fff040"/></linearGradient><linearGradient id="ffb" x1="0" y1="0" x2="0" y2="1"><stop offset="0" stop-color="#12a0ff"/><stop offset="1" stop-color="#2a3ad0"/></linearGradient></defs>
<circle cx="278" cy="1056" r="13.5" fill="url(#ffg)"/>
<path d="M282.5 1040.5L286 1044.5L290.5 1047.5L291.5 1056L285 1050Z" fill="#ffe830"/>
<circle cx="279.5" cy="1052.5" r="7.3" fill="url(#ffb)"/>
<path d="M267.5 1051Q268.5 1061 278 1062Q285 1062 287 1056Q282 1060 275.5 1058Q271 1056 271.5 1050Z" fill="#ff6a2a"/>
<path d="M266.5 1048L267.5 1043.5L271 1046.5Z" fill="#ff5030"/>
<rect x="310" y="1030" width="56" height="50" fill="#3a4560"/>
<rect x="1325.5" y="1055.5" width="0" height="0"/>
<path d="M337.5 1052V1068" stroke="#e05a5a"/><rect x="330.5" y="1054.5" width="7" height="10" fill="#f07272" stroke="#d05050"/>
<path d="M344.5 1043V1065" stroke="#3ad43a"/><rect x="341.5" y="1046.5" width="7" height="14" fill="#5ce05c" stroke="#3ab83a"/>
<rect x="366" y="1030" width="2" height="50" fill="#2a3450"/>
<circle cx="401.5" cy="1054.5" r="14" fill="#dd4b39"/><path d="M401.5 1040.5A14 14 0 0 1 413.6 1047.5L401.5 1047.5Z" fill="#dd4b39"/><path d="M389.4 1047.5A14 14 0 0 0 394.5 1066.6L401.5 1054.5Z" fill="#1da462"/><path d="M394.5 1066.6A14 14 0 0 0 413.6 1047.5H401.5Z" fill="#ffcd46"/><path d="M401.5 1054.5L389.4 1047.5A14 14 0 0 1 401.5 1040.5V1047.5Z" fill="#dd4b39"/><circle cx="401.5" cy="1054.5" r="6.3" fill="#fff"/><circle cx="401.5" cy="1054.5" r="4.8" fill="#4a8af4"/>
<rect x="129" y="1077" width="51" height="3" fill="#76b9ed"/>
<rect x="310" y="1077" width="56" height="3" fill="#76b9ed"/>
<rect x="377" y="1077" width="51" height="3" fill="#76b9ed"/>
<path d="M1687.5 1058.5L1695.5 1050.5L1703.5 1058.5" stroke="#fff" stroke-width="1.3" fill="none"/>
<path d="M1719 1063Q1720 1050 1733 1048.5M1722.5 1063Q1723.5 1053 1733 1052M1726 1063Q1727 1056 1733 1055.5" stroke="#fff" stroke-width="1.1" fill="none"/><circle cx="1731.5" cy="1061.5" r="1.3" fill="#fff"/>
<rect x="1748.5" y="1050.5" width="15" height="10" fill="#fff" stroke="#fff"/><rect x="1764" y="1053" width="1.5" height="5" fill="#fff"/><path d="M1745.5 1047V1051M1747.5 1047V1051M1744.5 1051H1748.5V1054H1744.5ZM1746.5 1054V1062" stroke="#fff" stroke-width="0.9" fill="none"/>
<path d="M1868.5 1045H1889.5V1059H1876L1873 1063V1059H1868.5Z" fill="#fff"/><path d="M1872 1049H1886M1872 1052.5H1886M1872 1056H1886" stroke="#0b1733" stroke-width="1.1"/>
<circle cx="1888.8" cy="1064" r="9.5" fill="#323a4c" stroke="#6f7888" stroke-width="1"/>
<path d="M1914.5 1029V1080" stroke="#4a5570"/>
</svg>
<div class="t" style="left:1781px;top:1037px;width:62px;text-align:center;font-size:14px;color:#fff">7:42 PM</div>
<div class="t" style="left:1771px;top:1059px;width:82px;text-align:center;font-size:15px;color:#fff">9/11/2018</div>
<div class="t" style="left:1884px;top:1058px;font-size:12px;font-weight:bold;color:#fff">3</div>

</body></html>
